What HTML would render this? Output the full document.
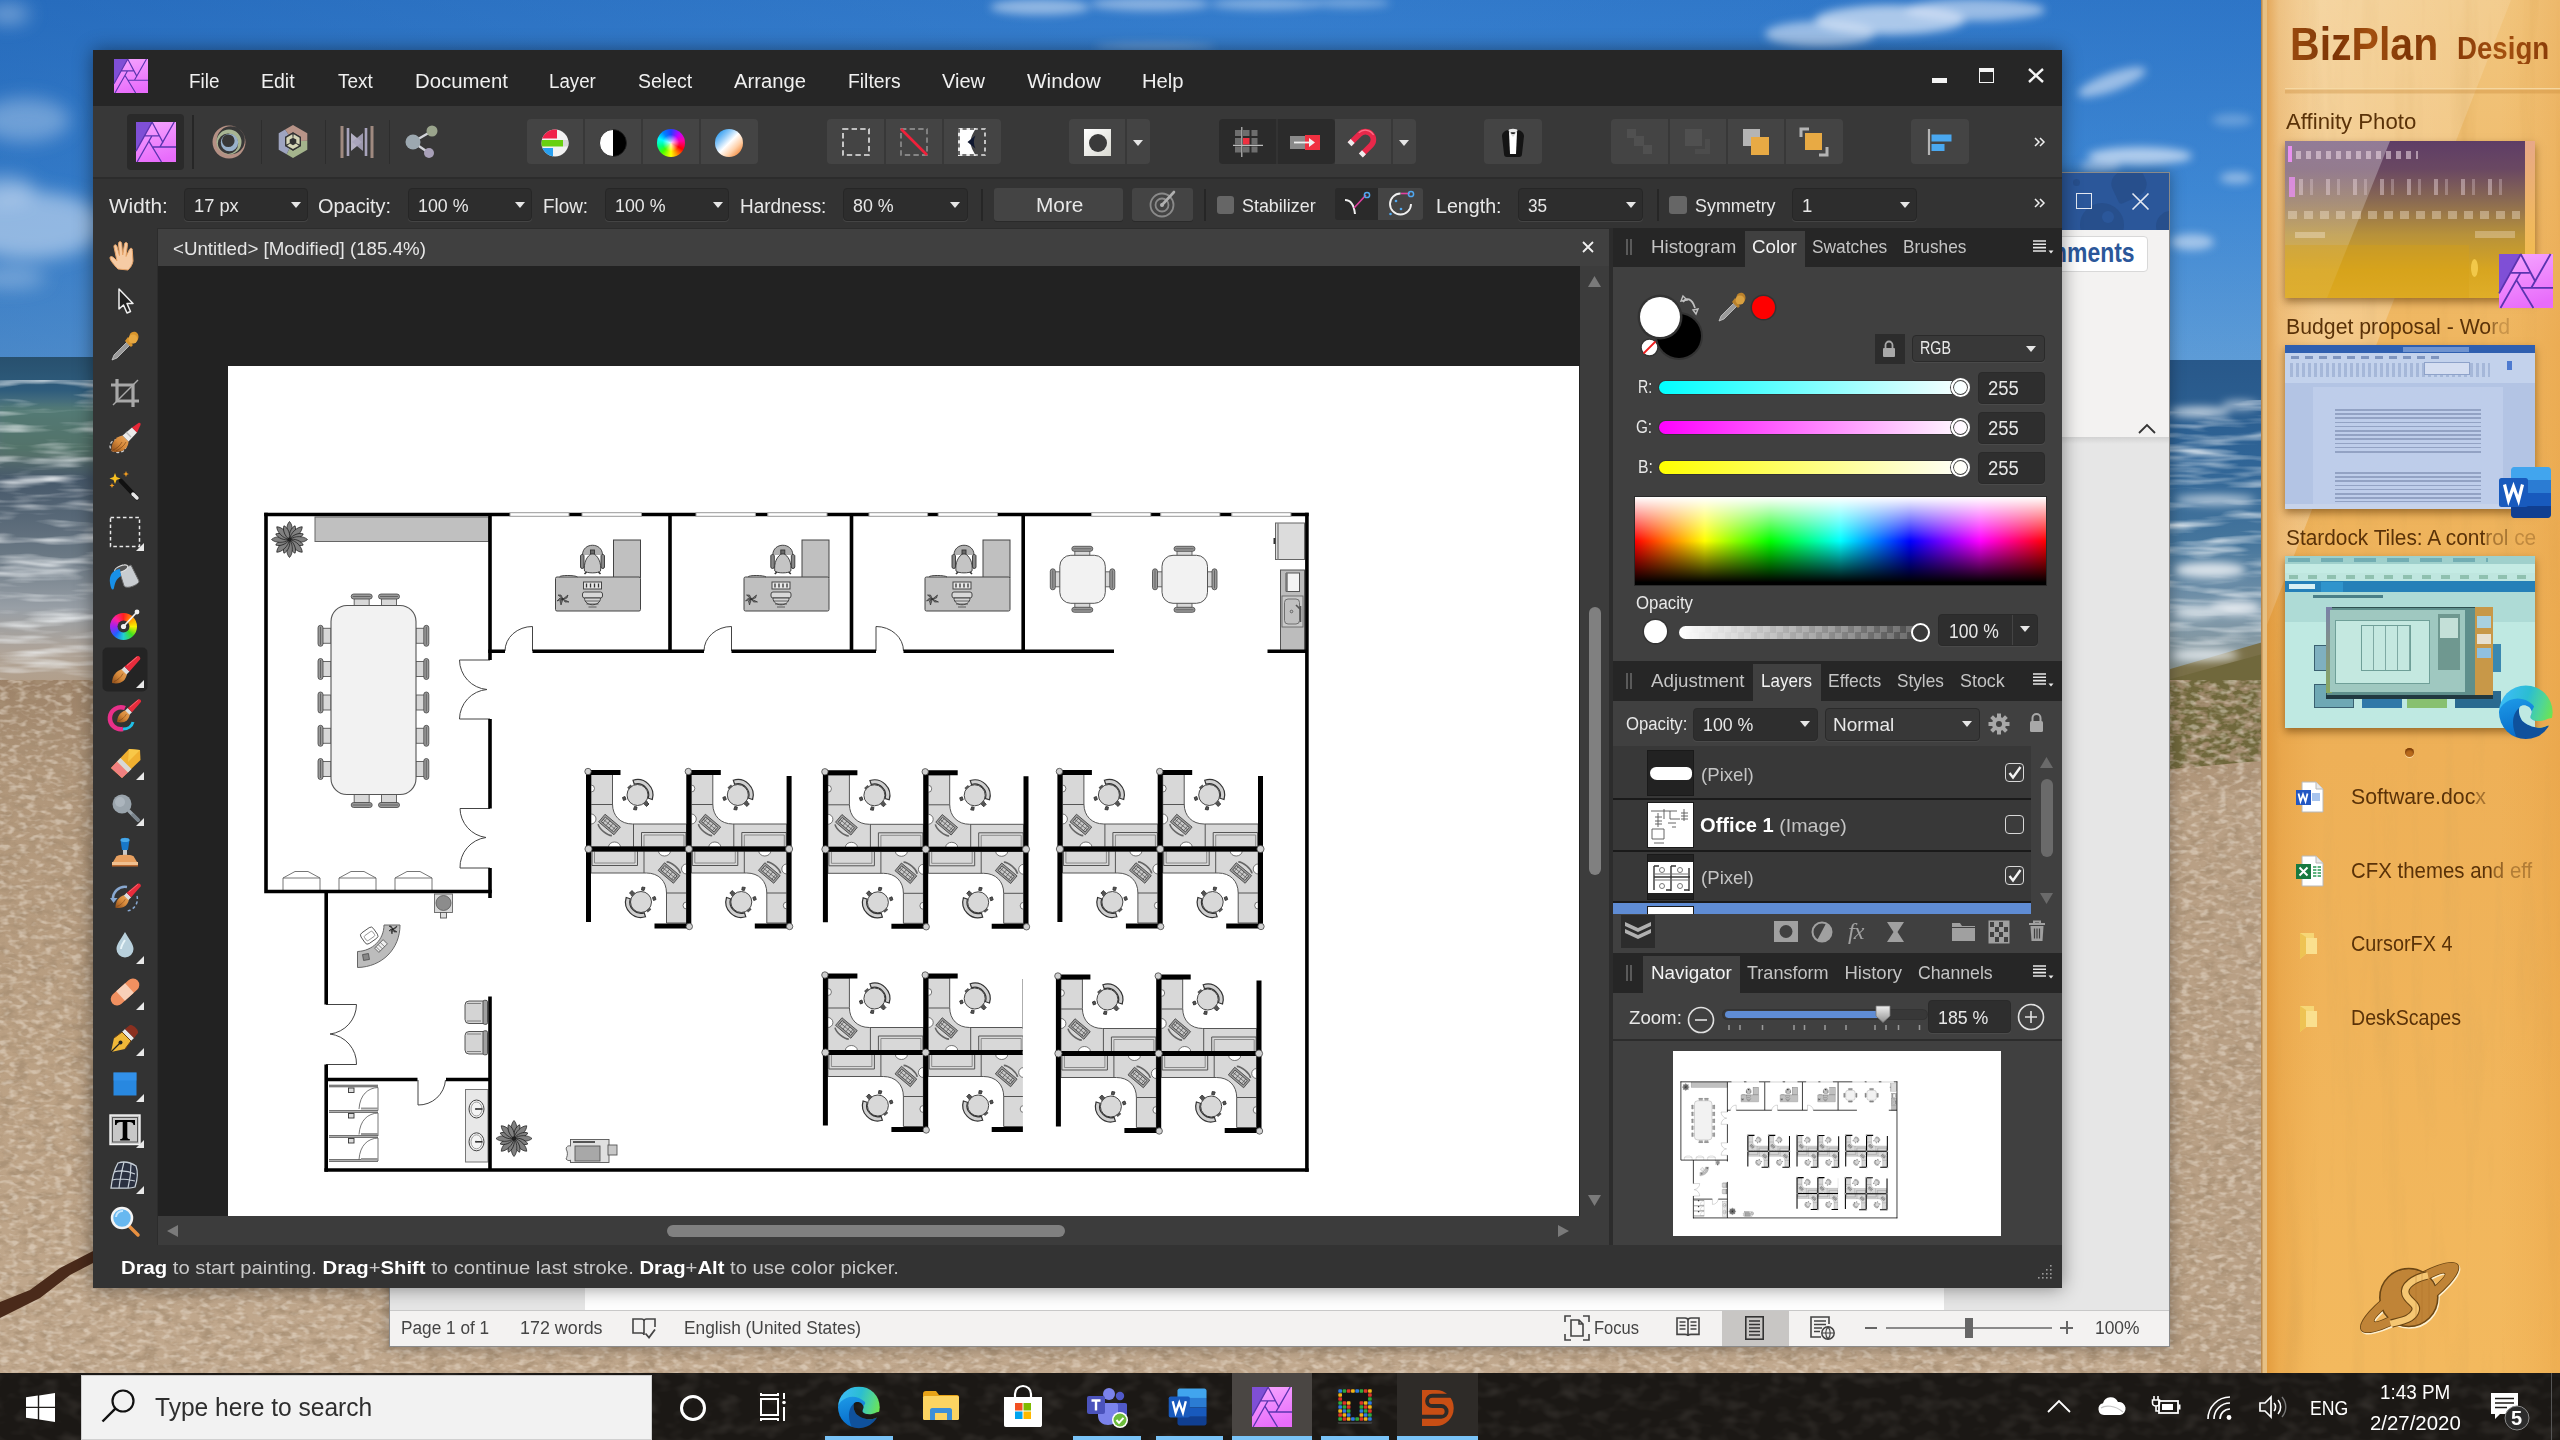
<!DOCTYPE html>
<html><head><meta charset="utf-8"><title>Desktop</title>
<style>
*{box-sizing:border-box;margin:0;padding:0}
html,body{width:2560px;height:1440px;overflow:hidden;background:#2a6fc0}
body{font-family:"Liberation Sans",sans-serif;position:relative}
.a{position:absolute}
.t{position:absolute;white-space:nowrap;line-height:1;transform-origin:0 50%}
svg{position:absolute;overflow:visible}
.mn{color:#f0f0f0;font-size:19.5px;top:71.5px}
.cl{color:#e8e8e8;font-size:19.5px;top:197px}
.cb{background:#2d2d2d;border:1px solid #262626;border-radius:4px;top:188px;height:33px;box-shadow:0 1px 0 #444}
.cv{color:#e8e8e8;font-size:18.5px;top:197px}
.arr{width:0;height:0;border-left:5.5px solid transparent;border-right:5.5px solid transparent;border-top:6px solid #e6e6e6}
.tg{background:#444;border-radius:4px;top:119px;height:45px}
.tdv{background:#383838;width:2px;top:119px;height:45px}
.pt{color:#c4c4c4;font-size:18.5px}
.pta{color:#f2f2f2}
.vb{background:#2e2e2e;border:1px solid #2a2a2a;border-radius:4px;box-shadow:0 1px 0 #4a4a4a}
.vt{color:#e8e8e8;font-size:20px}
.tl{color:#5a3208;font-size:22px}
.wt{color:#444;font-size:18px;top:1319px}
</style></head><body>
<!-- shared symbol defs -->
<svg width="0" height="0" style="position:absolute"><defs>
<linearGradient id="afg" x1="0.2" y1="0" x2="0.5" y2="1"><stop offset="0" stop-color="#f5a4ff"/><stop offset="1" stop-color="#e86cfb"/></linearGradient>
<g id="aflogo">
<rect width="54" height="54" fill="url(#afg)"/>
<path d="M0 0H21.900L0 39.400Z" fill="#7f4fd6"/>
<g fill="none" stroke="#5a34b0" stroke-width="1.800" stroke-linecap="butt">
<path d="M21.900 0L0 39.400M11.300 18.800H30.800M21.700 0L36.600 28M51.600 0L32.200 34M22.800 33.800H54M17.800 26.600L34.400 54M21.600 18.600L1.500 54"/>
</g>
</g>
<g id="wordicon">
<path d="M16 2h34c1.500 0 3 1.500 3 3v10H13V5c0-1.500 1.500-3 3-3z" fill="#41a5ee"/>
<rect x="13" y="15" width="40" height="13" fill="#2b7cd3"/>
<rect x="13" y="28" width="40" height="13" fill="#185abd"/>
<path d="M13 41h40v9c0 1.500-1.500 3-3 3H16c-1.500 0-3-1.500-3-3z" fill="#103f91"/>
<rect x="1" y="13" width="29" height="29" rx="2.500" fill="#185abd"/>
<path d="M6.500 19.500l4 16 5-14 5 14 4-16" fill="none" stroke="#fff" stroke-width="3.200" stroke-linejoin="miter"/>
</g>
<linearGradient id="edg1" gradientUnits="userSpaceOnUse" x1="4" y1="14" x2="55" y2="30"><stop offset="0" stop-color="#3bbcf4"/><stop offset=".45" stop-color="#2bbdd2"/><stop offset=".75" stop-color="#4fd597"/><stop offset="1" stop-color="#6ce452"/></linearGradient>
<linearGradient id="edg2" gradientUnits="userSpaceOnUse" x1="10" y1="14" x2="20" y2="56"><stop offset="0" stop-color="#1c98e6"/><stop offset="1" stop-color="#0669c8"/></linearGradient>
<clipPath id="edgc"><circle cx="27.800" cy="28.300" r="27.800"/></clipPath>
<mask id="edgm" maskUnits="userSpaceOnUse" x="0" y="0" width="60" height="60"><rect width="60" height="60" fill="#fff"/><path d="M21.200 23.200C23 21 26 20.800 28.300 21.400C31 22 33 24 33.900 27.300C34.500 30 31.800 32 32.900 34.400C36 38.500 46 38 50.800 35L60 33V43L50.800 42.100C46 44.500 41 44.800 36.500 43.600C30 42 25 38 23.700 36.500C21 32 20 27 21.200 23.200Z" fill="#000"/></mask>
<g id="edgeicon" clip-path="url(#edgc)"><g mask="url(#edgm)">
<rect width="56" height="57" fill="url(#edg1)"/>
<circle cx="19.500" cy="35.500" r="21.500" fill="url(#edg2)"/>
<path d="M21.200 23.200C20 27 21 32 23.700 36.500C25 38 30 42 36.500 43.600C41 44.800 46 44.500 50.800 42.100L57 42V58H20C16 50 13.500 42 15 34C16 29 18.500 25.500 21.200 23.200Z" fill="#0f519c"/>
<path d="M33.900 27.300C34.500 30 31.800 32 32.900 34.400C36 38.500 46 38 50.800 35L58 35V5H41C40 14 37 22 33.900 27.300Z" fill="url(#edg1)"/>
</g></g>
</defs></svg>
<!-- ===== DESKTOP BACKGROUND ===== -->
<svg class="a" style="left:0;top:0" width="2560" height="1440" viewBox="0 0 2560 1440">
<defs>
<linearGradient id="sky" x1="0" y1="0" x2="0" y2="1"><stop offset="0" stop-color="#2b72c4"/><stop offset=".45" stop-color="#3d86d2"/><stop offset="1" stop-color="#6fa7d8"/></linearGradient>
<linearGradient id="skyx" x1="0" y1="0" x2="1" y2="0"><stop offset="0" stop-color="#1e5fae" stop-opacity=".35"/><stop offset=".5" stop-color="#4a94e0" stop-opacity=".25"/><stop offset="1" stop-color="#3a86d6" stop-opacity=".1"/></linearGradient>
<linearGradient id="sea" x1="0" y1="0" x2="0" y2="1"><stop offset="0" stop-color="#28506e"/><stop offset=".1" stop-color="#2e5c7c"/><stop offset=".16" stop-color="#567a7e"/><stop offset=".3" stop-color="#566e6c"/><stop offset=".37" stop-color="#46586a"/><stop offset=".6" stop-color="#6a7884"/><stop offset=".76" stop-color="#989fa6"/><stop offset=".9" stop-color="#b0a498"/><stop offset="1" stop-color="#b29e88"/></linearGradient><linearGradient id="sea2" x1="0" y1="0" x2="0" y2="1"><stop offset="0" stop-color="#28588a"/><stop offset=".3" stop-color="#2f6496"/><stop offset=".55" stop-color="#45759c"/><stop offset=".75" stop-color="#7895aa"/><stop offset=".9" stop-color="#8a9aa0"/><stop offset="1" stop-color="#8a8a74"/></linearGradient><linearGradient id="sand" x1="0" y1="0" x2="0" y2="1"><stop offset="0" stop-color="#9c8268"/><stop offset=".12" stop-color="#b0967a"/><stop offset=".5" stop-color="#bba184"/><stop offset="1" stop-color="#c2aa90"/></linearGradient>
<filter id="nz" x="0" y="0" width="100%" height="100%"><feTurbulence type="fractalNoise" baseFrequency="0.07 0.13" numOctaves="3" seed="4"/><feColorMatrix values="0 0 0 0 .38  0 0 0 0 .27  0 0 0 0 .17  0 0 0 -3.2 1.8"/></filter><filter id="nz2" x="0" y="0" width="100%" height="100%"><feTurbulence type="fractalNoise" baseFrequency="0.11 0.2" numOctaves="2" seed="21"/><feColorMatrix values="0 0 0 0 .88  0 0 0 0 .8  0 0 0 0 .7  0 0 0 -3.4 1.8"/></filter>
<filter id="nzw" x="0" y="0" width="100%" height="100%"><feTurbulence type="fractalNoise" baseFrequency="0.012 0.09" numOctaves="3" seed="9"/><feColorMatrix values="0 0 0 0 .92  0 0 0 0 .95  0 0 0 0 .97  0 0 0 -2.4 1.25"/></filter>
<filter id="bl6"><feGaussianBlur stdDeviation="9"/></filter>
<filter id="bl3"><feGaussianBlur stdDeviation="4"/></filter>
</defs>
<rect width="2560" height="420" fill="url(#sky)"/>
<rect width="2560" height="420" fill="url(#skyx)"/>
<!-- clouds -->
<g filter="url(#bl6)" fill="#cfe0f4">
<ellipse cx="8" cy="14" rx="22" ry="10" opacity=".45"/><ellipse cx="25" cy="120" rx="45" ry="22" opacity=".4"/>
<ellipse cx="30" cy="225" rx="75" ry="34" opacity=".6"/><ellipse cx="5" cy="190" rx="30" ry="14" opacity=".5"/><ellipse cx="10" cy="278" rx="36" ry="10" opacity=".4"/>
</g>
<g filter="url(#bl3)" fill="#dfeaf8">
<ellipse cx="1040" cy="7" rx="50" ry="8" opacity=".55"/><ellipse cx="1150" cy="4" rx="60" ry="7" opacity=".5"/><ellipse cx="1265" cy="4" rx="55" ry="6" opacity=".45"/><ellipse cx="1350" cy="3" rx="40" ry="5" opacity=".4"/><ellipse cx="1155" cy="47" rx="60" ry="4" opacity=".3"/><ellipse cx="1820" cy="34" rx="55" ry="13" opacity=".6"/><ellipse cx="1890" cy="20" rx="75" ry="15" opacity=".7"/><ellipse cx="1975" cy="10" rx="70" ry="11" opacity=".6"/>
<ellipse cx="2112" cy="82" rx="36" ry="9" opacity=".6" transform="rotate(-20 2112 82)"/><ellipse cx="2140" cy="156" rx="52" ry="9" opacity=".7"/><ellipse cx="2100" cy="166" rx="20" ry="6" opacity=".5"/><ellipse cx="2236" cy="178" rx="16" ry="6" opacity=".5"/><ellipse cx="2192" cy="242" rx="22" ry="8" opacity=".6"/><ellipse cx="2232" cy="120" rx="20" ry="6" opacity=".3"/>
</g>
<!-- left sea -->
<rect x="0" y="357" width="120" height="330" fill="url(#sea)"/>
<rect x="0" y="405" width="120" height="50" fill="#4d7a5e" opacity=".3" filter="url(#bl3)"/>
<rect x="0" y="380" width="120" height="300" filter="url(#nzw)" opacity=".9"/>
<!-- right sea -->
<rect x="2160" y="360" width="110" height="330" fill="url(#sea2)"/>
<rect x="2160" y="400" width="110" height="250" filter="url(#nzw)" opacity=".8"/>
<path d="M2160 672L2270 640V800H2160z" fill="#7a7048"/>
<g filter="url(#bl3)" fill="#eef2f6"><ellipse cx="2200" cy="412" rx="30" ry="5" opacity=".8"/><ellipse cx="2240" cy="405" rx="18" ry="4" opacity=".7"/><ellipse cx="2215" cy="500" rx="40" ry="5" opacity=".7"/><ellipse cx="2210" cy="570" rx="36" ry="8" opacity=".85"/><ellipse cx="2235" cy="608" rx="26" ry="7" opacity=".9"/><ellipse cx="2195" cy="612" rx="22" ry="6" opacity=".8"/><ellipse cx="2205" cy="655" rx="34" ry="6" opacity=".8"/></g>
<!-- sand -->
<rect x="0" y="680" width="2300" height="760" fill="url(#sand)"/>
<path d="M2160 682L2270 652V760L2160 770z" fill="#70683c"/><rect x="2160" y="680" width="110" height="90" filter="url(#nz)" opacity=".9"/>
<rect x="2160" y="790" width="110" height="600" fill="#b9a085"/>
<rect x="0" y="680" width="2300" height="760" filter="url(#nz)" opacity=".75"/><rect x="0" y="680" width="2300" height="760" filter="url(#nz2)" opacity=".45"/>
<path d="M0 1318 L40 1298 L70 1275 L95 1262 L95 1250 L60 1268 L30 1290 L0 1302Z" fill="#4a2a1a"/>
</svg>
<!-- ===== WORD WINDOW (behind) ===== -->
<div class="a" style="left:389px;top:172px;width:1781px;height:1175px;background:#e6e6e6;border:1px solid #8a8a8a;box-shadow:0 0 14px rgba(0,0,0,.35)"></div>
<div class="a" style="left:390px;top:173px;width:1779px;height:57px;background:#2b579a;overflow:hidden">
  <div class="a" style="left:1690px;top:30px;width:44px;height:44px;border-radius:50%;background:#274f8c"></div>
  <div class="a" style="left:1712px;top:38px;width:12px;height:12px;border-radius:50%;background:#2b579a"></div>
  <div class="a" style="left:1683px;top:6px;width:7px;height:7px;border-radius:50%;background:#274f8c"></div>
  <div class="a" style="left:1722px;top:-4px;width:34px;height:30px;border-radius:40% 10% 40% 10%;background:#274f8c;transform:rotate(-25deg)"></div>
  <div class="a" style="left:1766px;top:38px;width:30px;height:30px;border-radius:50%;background:#274f8c"></div>
</div>
<div class="a" style="left:390px;top:230px;width:1779px;height:207px;background:#f3f2f1"></div>
<div class="a" style="left:390px;top:437px;width:1779px;height:7px;background:linear-gradient(#d2d2d2,#e6e6e6)"></div>
<!-- word window controls -->
<div class="a" style="left:2076px;top:193px;width:16px;height:16px;border:1.6px solid #e4e9f2"></div>
<svg style="left:2132px;top:193px" width="17" height="17" viewBox="0 0 17 17"><path d="M0.5 0.5L16.5 16.5M16.5 0.5L0.5 16.5" stroke="#e4e9f2" stroke-width="1.6" fill="none"/></svg>
<!-- comments button -->
<div class="a" style="left:2000px;top:236px;width:148px;height:36px;background:#fff;border:1px solid #d8d8d8;border-radius:4px"></div>
<div class="t" style="left:2015.500px;top:240px;font-size:27px;font-weight:bold;color:#2b579a;transform:scaleX(0.850)">Comments</div>
<svg style="left:2138px;top:423px" width="18" height="11" viewBox="0 0 18 11"><path d="M1 10L9 2L17 10" stroke="#333" stroke-width="1.8" fill="none"/></svg>
<!-- bottom: page + status -->
<div class="a" style="left:585px;top:1288px;width:1359px;height:22px;background:#fff"></div>
<div class="a" style="left:390px;top:1310px;width:1779px;height:36px;background:#f3f2f1;border-top:1px solid #c8c8c8"></div>
<div class="t wt" style="left:400.5px;transform:scaleX(0.957)">Page 1 of 1</div>
<div class="t wt" style="left:519.5px;transform:scaleX(0.994)">172 words</div>
<svg style="left:632px;top:1317px" width="24" height="23" viewBox="0 0 24 23"><path d="M12 4.200C12 3 10.900 2 9.500 2H1v14h8.500c1.400 0 2.500.800 2.500 2zM12 4.200C12 3 13.100 2 14.500 2H23v8" fill="none" stroke="#444" stroke-width="1.600"/><path d="M13.500 16.500l3.500 4 6-8" fill="none" stroke="#444" stroke-width="1.800"/></svg>
<div class="t wt" style="left:683.5px;transform:scaleX(0.962)">English (United States)</div>
<svg style="left:1564px;top:1315px" width="26" height="26" viewBox="0 0 26 26"><path d="M1 7V1h6M19 1h6v6M25 19v6h-6M7 25H1v-6" fill="none" stroke="#444" stroke-width="1.6"/><path d="M7 5h8l4 4v12H7z M15 5v4h4" fill="none" stroke="#444" stroke-width="1.6"/></svg>
<div class="t wt" style="left:1593.5px;transform:scaleX(0.918)">Focus</div>
<svg style="left:1676px;top:1316px" width="24" height="22" viewBox="0 0 24 22"><path d="M1 2h8c1.6 0 3 1 3 2.6V20c0-1-1.4-1.6-3-1.6H1zM23 2h-8c-1.6 0-3 1-3 2.6V20c0-1 1.4-1.6 3-1.6h8z" fill="none" stroke="#444" stroke-width="1.6"/><path d="M3.5 6h6M3.5 9.5h6M3.5 13h6M14.5 6h6M14.5 9.5h6M14.5 13h6" stroke="#444" stroke-width="1.3"/></svg>
<div class="a" style="left:1722px;top:1311px;width:67px;height:35px;background:#c8c6c4"></div>
<svg style="left:1745px;top:1316px" width="19" height="24" viewBox="0 0 19 24"><rect x=".8" y=".8" width="17.4" height="22.4" fill="none" stroke="#333" stroke-width="1.6"/><path d="M4 5h11M4 8.5h11M4 12h11M4 15.5h11M4 19h11" stroke="#333" stroke-width="1.5"/></svg>
<svg style="left:1810px;top:1316px" width="26" height="24" viewBox="0 0 26 24"><path d="M19 8V1H1v20h10" fill="none" stroke="#444" stroke-width="1.6"/><path d="M4 5h12M4 8.5h12M4 12h8M4 15.5h6" stroke="#444" stroke-width="1.4"/><circle cx="18" cy="17" r="6.2" fill="#f3f2f1" stroke="#444" stroke-width="1.5"/><path d="M12 17h12M18 11c-3 3-3 9 0 12M18 11c3 3 3 9 0 12" fill="none" stroke="#444" stroke-width="1.2"/></svg>
<div class="a" style="left:1865px;top:1327px;width:12px;height:1.5px;background:#666"></div>
<div class="a" style="left:1886px;top:1327px;width:166px;height:1.5px;background:#8a8a8a"></div>
<div class="a" style="left:1965px;top:1318px;width:8px;height:20px;background:#666"></div>
<div class="a" style="left:2060px;top:1327px;width:13px;height:1.5px;background:#666"></div>
<div class="a" style="left:2066px;top:1321px;width:1.5px;height:13px;background:#666"></div>
<div class="t wt" style="left:2094.5px;transform:scaleX(0.967)">100%</div>
<!-- ===== AFFINITY PHOTO WINDOW ===== -->
<div class="a" style="left:93px;top:50px;width:1969px;height:1238px;background:#333;box-shadow:0 0 18px rgba(0,0,0,.45)"></div>
<div class="a" style="left:93px;top:50px;width:1969px;height:56px;background:#262626"></div>
<div class="a" style="left:93px;top:106px;width:1969px;height:73px;background:#383838;border-bottom:2px solid #2c2c2c"></div>
<div class="a" style="left:93px;top:181px;width:1969px;height:47px;background:#333"></div>
<div class="a" style="left:93px;top:228px;width:64px;height:1017px;background:#333"></div>
<div class="a" style="left:157px;top:228px;width:1456px;height:1017px;background:#2c2c2c"></div>
<div class="a" style="left:158px;top:229px;width:1451px;height:37px;background:#404040"></div>
<div class="a" style="left:158px;top:266px;width:1422px;height:950px;background:#222"></div>
<div class="a" style="left:228px;top:366px;width:1351px;height:850px;background:#fff"></div>
<div class="a" style="left:1580px;top:266px;width:29px;height:950px;background:#3c3c3c"></div>
<div class="a" style="left:158px;top:1216px;width:1451px;height:29px;background:#3c3c3c"></div>
<div class="a" style="left:1613px;top:228px;width:449px;height:1017px;background:#404040"></div>
<div class="a" style="left:93px;top:1245px;width:1969px;height:43px;background:#333"></div>
<!-- title bar -->
<svg style="left:114px;top:59px" width="34" height="34" viewBox="0 0 54 54"><use href="#aflogo"/></svg>
<div class="t mn" style="left:188.5px;transform:scaleX(0.968)">File</div>
<div class="t mn" style="left:261px;transform:scaleX(1.000)">Edit</div>
<div class="t mn" style="left:337.5px;transform:scaleX(0.972)">Text</div>
<div class="t mn" style="left:414.5px;transform:scaleX(1.045)">Document</div>
<div class="t mn" style="left:549px;transform:scaleX(0.959)">Layer</div>
<div class="t mn" style="left:638px;transform:scaleX(1.000)">Select</div>
<div class="t mn" style="left:733.5px;transform:scaleX(1.036)">Arrange</div>
<div class="t mn" style="left:847.5px;transform:scaleX(0.991)">Filters</div>
<div class="t mn" style="left:941.5px;transform:scaleX(1.024)">View</div>
<div class="t mn" style="left:1026.5px;transform:scaleX(1.065)">Window</div>
<div class="t mn" style="left:1142px;transform:scaleX(1.038)">Help</div>
<div class="a" style="left:1932px;top:78px;width:15px;height:5px;background:#f4f4f4"></div>
<div class="a" style="left:1979px;top:68px;width:15px;height:15px;border:1.8px solid #f4f4f4;border-top-width:4.5px"></div>
<svg style="left:2028px;top:68px" width="16" height="15" viewBox="0 0 16 15"><path d="M1 1L15 14M15 1L1 14" stroke="#f4f4f4" stroke-width="2.4" fill="none"/></svg>
<!-- toolbar: personas -->
<div class="a" style="left:127px;top:114px;width:57px;height:56px;background:#2a2a2a;border-radius:4px"></div>
<svg style="left:136px;top:122px" width="40" height="40" viewBox="0 0 54 54"><use href="#aflogo"/></svg>
<div class="a" style="left:192px;top:115px;width:2px;height:54px;background:#262626"></div>
<svg style="left:210px;top:123px" width="38" height="38" viewBox="0 0 38 38"><path fill-rule="evenodd" fill="#b49084" d="M2.500 19a16.500 16.500 0 1 0 33 0a16.500 16.500 0 1 0-33 0ZM6.800 17.300a14 14 0 1 0 28 0a14 14 0 1 0-28 0Z"/><path fill-rule="evenodd" fill="#a8b694" d="M6.500 19a12.500 12.500 0 1 0 25 0a12.500 12.500 0 1 0-25 0ZM7.800 20.800a10.200 10.200 0 1 0 20.400 0a10.200 10.200 0 1 0-20.400 0Z"/><path fill-rule="evenodd" fill="#98b0ca" d="M10.800 19.500a8.700 8.700 0 1 0 17.400 0a8.700 8.700 0 1 0-17.400 0ZM12 17.800a6.300 6.300 0 1 0 12.600 0a6.300 6.300 0 1 0-12.600 0Z"/></svg>
<svg style="left:275px;top:124px" width="36" height="36" viewBox="0 0 36 36"><polygon points="10.1,5.5 18.0,1.0 32.3,9.3 32.3,16.7 26.0,17.0 26.0,12.9 18.0,8.3 13.6,10.8" fill="#b89488"/><polygon points="32.3,16.7 32.3,25.8 18.0,34.0 11.6,30.3 14.4,24.6 18.0,26.7 26.0,22.1 26.0,17.0" fill="#a4b48c"/><polygon points="11.6,30.3 3.7,25.8 3.7,9.2 10.1,5.5 13.6,10.8 10.0,12.9 10.0,22.1 14.4,24.6" fill="#9ea4c0"/><polygon points="18.0,8.3 26.0,12.9 26.0,22.1 18.0,26.7 10.0,22.1 10.0,12.9" fill="#333"/><polygon points="18.7,10.3 24.6,13.7 24.6,20.5 21.3,19.0 21.3,15.6 18.3,13.9" fill="#d6d6b8"/><polygon points="23.9,21.7 18.0,25.1 12.1,21.7 15.0,19.6 18.0,21.3 21.0,19.6" fill="#d6d6b8"/><polygon points="11.4,20.5 11.4,13.7 17.3,10.3 17.7,13.9 14.7,15.6 14.7,19.0" fill="#d6d6b8"/></svg>
<svg style="left:340px;top:125px" width="34" height="34" viewBox="0 0 34 34"><path d="M2 1v32M32 1v32" stroke="#a08a80" stroke-width="3"/><path d="M8 3v28M26 3v28" stroke="#a8a4bc" stroke-width="2.600"/><path d="M11 8l11 9-11 9z" fill="#b4b0c4"/><path d="M23 8L12 17l11 9z" fill="#a8a4bc" opacity=".9"/></svg>
<svg style="left:404px;top:125px" width="34" height="34" viewBox="0 0 34 34"><path d="M9 17L28 6M9 17l16 11" stroke="#d2d4da" stroke-width="2.400"/><circle cx="9" cy="17" r="7.500" fill="#9ca8b0"/><circle cx="28" cy="6" r="5.500" fill="#9aa48c"/><circle cx="25" cy="28" r="5" fill="#a8a0b8"/></svg>
<div class="a" style="left:260.500px;top:120px;width:1.500px;height:44px;background:#2d2d2d"></div><div class="a" style="left:324.500px;top:120px;width:1.500px;height:44px;background:#2d2d2d"></div><div class="a" style="left:388.500px;top:120px;width:1.500px;height:44px;background:#2d2d2d"></div>
<!-- group 2 -->
<div class="a tg" style="left:527px;width:231px"></div>
<div class="a tdv" style="left:583px"></div><div class="a tdv" style="left:641px"></div><div class="a tdv" style="left:699px"></div>
<svg style="left:541px;top:129px" width="28" height="28" viewBox="0 0 28 28"><defs><clipPath id="c14"><circle cx="14" cy="14" r="13.500"/></clipPath></defs><g clip-path="url(#c14)"><rect width="28" height="28" fill="#f2f2f2"/><rect x="0" y="0" width="16" height="9.500" fill="#f0204a"/><rect x="0" y="11" width="22" height="6.500" fill="#68d010"/><rect x="0" y="19" width="12" height="9" fill="#28a0f0"/><rect x="22" y="11" width="6" height="6.500" fill="#d8d8d8"/></g></svg>
<svg style="left:599px;top:129px" width="28" height="28" viewBox="0 0 28 28"><circle cx="14" cy="14" r="13.500" fill="#000"/><path d="M14 .5a13.500 13.500 0 0 0 0 27z" fill="#fff"/><circle cx="14" cy="14" r="13.500" fill="none" stroke="#222" stroke-width=".8"/></svg>
<div class="a" style="left:657px;top:129px;width:28px;height:28px;border-radius:50%;background:conic-gradient(from 0deg,#2040ff,#c000ff 12%,#ff00a0 22%,#ff0000 33%,#ff9000 42%,#ffff00 50%,#40ff00 62%,#00ff80 70%,#00ffff 80%,#0080ff 90%,#2040ff)"></div>
<div class="a" style="left:657px;top:129px;width:28px;height:28px;border-radius:50%;background:radial-gradient(circle,rgba(255,255,255,.85) 0,rgba(255,255,255,0) 42%)"></div>
<div class="a" style="left:715px;top:129px;width:28px;height:28px;border-radius:50%;background:linear-gradient(135deg,#2a9af0 10%,#8cc8f8 30%,#ffffff 50%,#ffd0a8 70%,#f08030 92%)"></div>
<!-- group 3 -->
<div class="a tg" style="left:827px;width:174px"></div>
<div class="a tdv" style="left:884px"></div><div class="a tdv" style="left:942px"></div>
<svg style="left:842px;top:128px" width="28" height="28" viewBox="0 0 28 28"><rect x="1" y="1" width="26" height="26" fill="none" stroke="#e8e8e8" stroke-width="1.600" stroke-dasharray="5.400 3.200"/></svg>
<svg style="left:900px;top:128px" width="28" height="28" viewBox="0 0 28 28"><rect x="1" y="1" width="26" height="26" fill="none" stroke="#9a9a9a" stroke-width="1.400" stroke-dasharray="5.400 3.200"/><path d="M1 1l26 26" stroke="#f0203a" stroke-width="2.600"/></svg>
<svg style="left:958px;top:128px" width="28" height="28" viewBox="0 0 28 28"><path d="M0 0H18C14.500 6 12.500 10 12.500 14s2 8 5.500 14H0z" fill="#fff"/><path d="M9.500 14l8-6.500c-2.200 4.200-2.200 8.800 0 13z" fill="#101830"/><rect x="1" y="1" width="26" height="26" fill="none" stroke="#e4e4e4" stroke-width="1.600" stroke-dasharray="4 3.400"/><path d="M16 1H1V27H16" fill="none" stroke="#444" stroke-width="1.600" stroke-dasharray="4 3.400"/></svg>
<!-- group 4 -->
<div class="a tg" style="left:1069px;width:81px"></div>
<div class="a tdv" style="left:1125px"></div>
<div class="a" style="left:1084px;top:129px;width:27px;height:27px;background:linear-gradient(135deg,#fff,#d8d8d0)"></div>
<div class="a" style="left:1088.500px;top:133.500px;width:18px;height:18px;border-radius:50%;background:#3a3a3a"></div>
<div class="a arr" style="left:1132.500px;top:140px"></div>
<!-- group 5 -->
<div class="a tg" style="left:1219px;width:116px;background:#2b2b2b"></div>
<div class="a" style="left:1276px;top:119px;width:1.500px;height:45px;background:#333"></div>
<div class="a tg" style="left:1335px;width:81px;border-radius:0 4px 4px 0"></div>
<div class="a tdv" style="left:1391px"></div>
<svg style="left:1233px;top:127px" width="30" height="30" viewBox="0 0 30 30"><g fill="#6e6e6e"><rect x="2" y="3" width="6" height="6"/><rect x="10" y="3" width="6.500" height="6"/><rect x="18.500" y="3" width="6" height="6"/><rect x="2" y="11" width="6" height="6.500"/><rect x="18.500" y="11" width="6" height="6.500"/><rect x="2" y="19.500" width="6" height="6"/><rect x="10" y="19.500" width="6.500" height="6"/><rect x="18.500" y="19.500" width="6" height="6"/></g><rect x="10" y="11" width="6.500" height="6.500" fill="#f03040"/><path d="M8.800 0v30M0 18.300h30" stroke="#bdbdbd" stroke-width="1.200"/></svg>
<svg style="left:1290px;top:135px" width="30" height="15" viewBox="0 0 30 15"><rect x="0" y="1" width="15" height="13" fill="#8a8a8a"/><rect x="15" y="0" width="15" height="15" fill="#f03040"/><path d="M4 7.500h17" stroke="#f0f0f0" stroke-width="1.800"/><path d="M19 3l6 4.500-6 4.500z" fill="#f0f0f0"/></svg>
<svg style="left:1346px;top:126px" width="34" height="32" viewBox="0 0 34 32"><g transform="rotate(45 18 15)"><path d="M10 27V13a8 8 0 0 1 16 0v14" stroke="#e8284a" stroke-width="5.600" fill="none"/><path d="M10 27.500v-4.500M26 27.500v-4.500" stroke="#ececec" stroke-width="5.600"/><path d="M8.500 13a9.500 9.500 0 0 1 12-9" stroke="#ff7088" stroke-width="1.200" fill="none"/></g></svg>
<div class="a arr" style="left:1398.500px;top:140px"></div>
<!-- group 6 assistant -->
<div class="a tg" style="left:1484px;width:58px"></div>
<svg style="left:1500px;top:128px" width="26" height="30" viewBox="0 0 26 30"><path d="M2 8c0-3 3-6 7-6h8c4 0 7 3 7 6l-2 18c0 2-1 3-3 3H7c-2 0-3-1-3-3z" fill="#141414"/><path d="M9 4h8l-1 22H10z" fill="#fff"/><path d="M9 4l4 5 4-5-1.500-2h-5z" fill="#d8d8d8"/><path d="M10.500 3.500h5l-1 2.500h-3z" fill="#222"/><ellipse cx="13" cy="2.500" rx="4.500" ry="1.800" fill="#e8e8e8"/></svg>
<!-- group 7 -->
<div class="a tg" style="left:1611px;width:232px"></div>
<div class="a tdv" style="left:1668px"></div><div class="a tdv" style="left:1726px"></div><div class="a tdv" style="left:1784px"></div>
<svg style="left:1626px;top:128px" width="28" height="28" viewBox="0 0 28 28"><g fill="#505050"><rect x="1" y="1" width="9" height="9"/><rect x="8" y="8" width="10" height="10"/><rect x="17" y="17" width="9" height="9"/></g></svg>
<svg style="left:1684px;top:128px" width="28" height="28" viewBox="0 0 28 28"><rect x="1" y="1" width="17" height="17" fill="#505050"/><path d="M21 11h5v15H11v-5h10z" fill="#4c4c4c"/></svg>
<svg style="left:1742px;top:128px" width="28" height="28" viewBox="0 0 28 28"><rect x="1" y="1" width="17" height="17" fill="#b4b4b4"/><rect x="9" y="9" width="18" height="18" fill="#e8aa44"/></svg>
<svg style="left:1800px;top:128px" width="28" height="28" viewBox="0 0 28 28"><path d="M1 9V1h8" fill="none" stroke="#b4b4b4" stroke-width="3"/><path d="M27 19v8h-8" fill="none" stroke="#b4b4b4" stroke-width="3"/><rect x="5" y="5" width="17" height="17" fill="#e8aa44"/></svg>
<!-- group 8 -->
<div class="a tg" style="left:1911px;width:58px"></div>
<svg style="left:1927px;top:128px" width="28" height="28" viewBox="0 0 28 28"><path d="M2 1v26" stroke="#b4b4b4" stroke-width="2.200"/><rect x="4.500" y="6.500" width="20" height="7" fill="#4aa8f0"/><rect x="4.500" y="16" width="13" height="7" fill="#4aa8f0"/></svg>
<svg style="left:2034px;top:137px" width="11" height="10" viewBox="0 0 11 10"><path d="M1 1l4 4-4 4M6 1l4 4-4 4" fill="none" stroke="#f0f0f0" stroke-width="1.500"/></svg>
<svg style="left:2034px;top:198px" width="11" height="10" viewBox="0 0 11 10"><path d="M1 1l4 4-4 4M6 1l4 4-4 4" fill="none" stroke="#f0f0f0" stroke-width="1.500"/></svg>
<!-- context toolbar -->
<div class="t cl" style="left:108.5px;transform:scaleX(1.064)">Width:</div>
<div class="a cb" style="left:184px;width:124px"></div><div class="t cv" style="left:193.5px;transform:scaleX(0.989)">17 px</div><div class="a arr" style="left:291px;top:202px"></div>
<div class="t cl" style="left:318px;transform:scaleX(1.021)">Opacity:</div>
<div class="a cb" style="left:408px;width:124px"></div><div class="t cv" style="left:417.5px;transform:scaleX(0.962)">100 %</div><div class="a arr" style="left:515px;top:202px"></div>
<div class="t cl" style="left:542.5px;transform:scaleX(0.968)">Flow:</div>
<div class="a cb" style="left:605px;width:124px"></div><div class="t cv" style="left:615px;transform:scaleX(0.962)">100 %</div><div class="a arr" style="left:713px;top:202px"></div>
<div class="t cl" style="left:740px;transform:scaleX(0.972)">Hardness:</div>
<div class="a cb" style="left:843px;width:125px"></div><div class="t cv" style="left:852.5px;transform:scaleX(0.964)">80 %</div><div class="a arr" style="left:950px;top:202px"></div>
<div class="a" style="left:981px;top:189px;width:2px;height:32px;background:#262626"></div>
<div class="a" style="left:994px;top:187.500px;width:129px;height:33px;background:#444;border-radius:3px;box-shadow:0 1px 0 #2a2a2a"></div>
<div class="t cl" style="left:1035.5px;top:196px;transform:scaleX(1.068)">More</div>
<div class="a" style="left:1132px;top:187.500px;width:61px;height:33px;background:#444;border-radius:3px;box-shadow:0 1px 0 #2a2a2a"></div>
<svg style="left:1148px;top:189px" width="30" height="30" viewBox="0 0 30 30"><circle cx="14" cy="16" r="11.500" fill="none" stroke="#8a8a8a" stroke-width="1.800"/><circle cx="14" cy="16" r="6.500" fill="none" stroke="#8a8a8a" stroke-width="1.800"/><path d="M14 16L26 3" stroke="#b0b0b0" stroke-width="2.600" stroke-linecap="round"/><circle cx="14" cy="16" r="2" fill="#b0b0b0"/></svg>
<div class="a" style="left:1204px;top:189px;width:2px;height:32px;background:#262626"></div>
<div class="a" style="left:1216.500px;top:196px;width:17.500px;height:17.500px;background:#666;border-radius:3px"></div>
<div class="t cl" style="left:1242px;top:195.500px;font-size:19px;transform:scaleX(0.942)">Stabilizer</div>
<div class="a" style="left:1335px;top:188px;width:43px;height:32px;background:#2a2a2a;border-radius:3px 0 0 3px"></div>
<div class="a" style="left:1378px;top:188px;width:45px;height:32px;background:#444;border-radius:0 3px 3px 0"></div>
<svg style="left:1343px;top:191px" width="28" height="26" viewBox="0 0 28 26"><path d="M2 9c6 0 9 5 10 14" fill="none" stroke="#f0f0f0" stroke-width="2"/><path d="M11 17L23 4" stroke="#e040a0" stroke-width="1.600"/><circle cx="24" cy="4" r="2.600" fill="none" stroke="#50a8f0" stroke-width="1.500"/></svg>
<svg style="left:1387px;top:190px" width="28" height="28" viewBox="0 0 28 28"><path d="M24 14A10.500 10.500 0 1 1 13.500 3.500" fill="none" stroke="#f0f0f0" stroke-width="1.900"/><path d="M14 3.500h9" stroke="#e040a0" stroke-width="1.600"/><circle cx="24" cy="4" r="2.600" fill="none" stroke="#50a8f0" stroke-width="1.500"/><circle cx="9" cy="11" r="1.300" fill="#50a8f0"/><circle cx="14" cy="19" r="1.300" fill="#50a8f0"/><circle cx="3.500" cy="24" r="1.300" fill="#50a8f0"/></svg>
<div class="t cl" style="left:1436px;transform:scaleX(1.008)">Length:</div>
<div class="a cb" style="left:1518px;width:125px"></div><div class="t cv" style="left:1528px;transform:scaleX(0.929)">35</div><div class="a arr" style="left:1626px;top:202px"></div>
<div class="a" style="left:1657px;top:189px;width:2px;height:32px;background:#262626"></div>
<div class="a" style="left:1669px;top:196px;width:17.500px;height:17.500px;background:#666;border-radius:3px"></div>
<div class="t cl" style="left:1694.5px;top:195.500px;font-size:19px;transform:scaleX(0.942)">Symmetry</div>
<div class="a cb" style="left:1792px;width:125px"></div><div class="t cv" style="left:1802px">1</div><div class="a arr" style="left:1900px;top:202px"></div>
<!-- doc tab -->
<div class="t" style="left:173px;top:241px;font-size:17.500px;color:#e6e6e6;transform:scaleX(1.070)">&lt;Untitled&gt; [Modified] (185.4%)</div>
<svg style="left:1582px;top:241px" width="12" height="12" viewBox="0 0 12 12"><path d="M1 1l10 10M11 1L1 11" stroke="#f0f0f0" stroke-width="1.800"/></svg>
<!-- scrollbars -->
<svg style="left:1588px;top:276px" width="13" height="11" viewBox="0 0 13 11"><path d="M6.500 0L13 11H0z" fill="#7a7a7a"/></svg>
<svg style="left:1588px;top:1195px" width="13" height="11" viewBox="0 0 13 11"><path d="M6.500 11L13 0H0z" fill="#7a7a7a"/></svg>
<div class="a" style="left:1589px;top:607px;width:12px;height:268px;background:#808080;border-radius:6px"></div>
<svg style="left:167px;top:1225px" width="11" height="12" viewBox="0 0 11 12"><path d="M0 6L11 0v12z" fill="#7a7a7a"/></svg>
<svg style="left:1558px;top:1225px" width="11" height="12" viewBox="0 0 11 12"><path d="M11 6L0 0v12z" fill="#7a7a7a"/></svg>
<div class="a" style="left:667px;top:1225px;width:398px;height:12px;background:#808080;border-radius:6px"></div>
<!-- status -->
<div class="t" style="left:120.500px;top:1258px;font-size:19px;color:#c8c8c8;transform:scaleX(1.066)"><b style="color:#fff">Drag</b> to start painting. <b style="color:#fff">Drag</b>+<b style="color:#fff">Shift</b> to continue last stroke. <b style="color:#fff">Drag</b>+<b style="color:#fff">Alt</b> to use color picker.</div>
<svg style="left:2037px;top:1264px" width="16" height="16" viewBox="0 0 16 16"><g fill="#9a9a9a"><rect x="13" y="1" width="1.600" height="1.600"/><rect x="13" y="5" width="1.600" height="1.600"/><rect x="9" y="5" width="1.600" height="1.600"/><rect x="13" y="9" width="1.600" height="1.600"/><rect x="9" y="9" width="1.600" height="1.600"/><rect x="5" y="9" width="1.600" height="1.600"/><rect x="13" y="13" width="1.600" height="1.600"/><rect x="9" y="13" width="1.600" height="1.600"/><rect x="5" y="13" width="1.600" height="1.600"/><rect x="1" y="13" width="1.600" height="1.600"/></g></svg>
<!-- left tools -->
<svg style="left:93px;top:228px" width="64" height="1017" viewBox="93 228 64 1017">
<defs>
<linearGradient id="brs" x1="0" y1="1" x2="1" y2="0"><stop offset="0" stop-color="#8a4a18"/><stop offset=".5" stop-color="#d88a3a"/><stop offset="1" stop-color="#e8a860"/></linearGradient>
<g id="brush"><path d="M-13.500 12.500c-1-8 4-15 11-16l6 6c0 7-7 12-17 10z" fill="url(#brs)"/><path d="M-12 11c3-1 7-4 9-8M-9 12c4-2 8-5 10-9" fill="none" stroke="#6a3810" stroke-width=".9" opacity=".6"/><path d="M-2.500-3.500l6 6L12-6.500 7-11.500z" fill="#ececec"/><path d="M1-7l5 5" stroke="#b8b8b8" stroke-width="1.200"/><path d="M7-11.500l5 5 3.500-7.500c.5-1.500-.5-2.500-2-2z" fill="#e82838"/></g>
<g id="brush2"><path d="M-14 13c0-7 4-12 10-14l5 5c-1 6-6 11-15 9z" fill="url(#brs)"/><path d="M-12 11.500c3-1 7-4 9-8" fill="none" stroke="#6a3810" stroke-width=".9" opacity=".6"/><path d="M-4.500-.500l5 5 3-3-5-5z" fill="#dedede"/><path d="M-1.500-3.500l5 5L14-10.500c1.200-2-1.500-4.500-3.500-3z" fill="#e82c3c"/><path d="M1-4.500L11-13" stroke="#ff8a90" stroke-width="1" opacity=".7"/></g>
<path id="corner" d="M0 0v-8l-8 8z" fill="#e8e8e8"/>
</defs>
<!-- hand -->
<g transform="translate(125 256)"><path d="M-7 13c-4-4-8-9-8-11s2-2 4 0l3 3-3-14c-.5-2.500 2.500-3 3-.500l2.500 9-1-12c0-2.500 3-2.500 3.200 0l1 11.500 1.800-11c.4-2.300 3.300-2 3 .400l-1.500 12 3.500-7c1-2 3.500-1 2.800 1L8 5c-1 5-3 7-5 9z" fill="#f6cba4" stroke="#e8a468" stroke-width="1" stroke-linejoin="round"/></g>
<!-- move arrow -->
<g transform="translate(125 301)"><path d="M-6-12v20l4.500-4 3.500 8 3.500-1.500-3.500-8h6z" fill="#222" stroke="#f0f0f0" stroke-width="1.500" stroke-linejoin="round"/></g>
<!-- eyedropper -->
<g transform="translate(125 347)"><path d="M-13 13l2-5L2-5l3 3L-8 11z" fill="#9a9a9a" stroke="#ccc" stroke-width=".8"/><path d="M0-6l6 6 2-2-1.500-1.500c4 0 7-3 7-7s-4-6-7-4c-2 1-2.500 4-2 6L3-10z" fill="#d8942c"/><circle cx="8" cy="-8" r="4.500" fill="#e8a840"/></g>
<!-- crop -->
<g transform="translate(125 393)" fill="none" stroke="#a8a8a8" stroke-width="3.200"><path d="M-8-14v22h22M-14-8h22v22"/><path d="M-12 12L13-13" stroke-width="1.500"/></g>
<!-- selection brush -->
<g transform="translate(125 439)"><ellipse cx="-7" cy="7" rx="8" ry="6.500" fill="none" stroke="#d0d0d0" stroke-width="1.300" stroke-dasharray="3 2"/><use href="#brush"/></g>
<!-- flood select wand -->
<g transform="translate(125 485)"><path d="M-4-4l16 17" stroke="#111" stroke-width="4.500" stroke-linecap="round"/><path d="M8 9l4 4" stroke="#e8e8e8" stroke-width="3.500" stroke-linecap="round"/><path d="M-10-12l1.500 4 4 1.500-4 1.500-1.500 4-1.500-4-4-1.500 4-1.500z" fill="#f8c020"/><path d="M1-14l.800 2.200 2.200.800-2.200.800L1-8l-.800-2.200-2.200-.800 2.200-.800zM-13-2l.700 1.800 1.800.700-1.800.700-.700 1.800-.700-1.800-1.800-.700 1.800-.700z" fill="#f8a020"/></g>
<!-- marquee -->
<rect x="110.500" y="517.500" width="29" height="29" fill="none" stroke="#e8e8e8" stroke-width="1.500" stroke-dasharray="3.600 2.600"/>
<use href="#corner" x="144" y="551"/>
<!-- bucket -->
<g transform="translate(125 578)"><path d="M-6-8l12-5 8 16c1 3-12 9-15 5z" fill="#c8ccd0" stroke="#666" stroke-width="1"/><ellipse cx="0" cy="-10" rx="7" ry="3" transform="rotate(-22)" fill="#555" stroke="#e0e0e0" stroke-width="1.200"/><path d="M-5-9c-8 1-11 7-10 14s3 8 4 5c1-5 2-9 7-12z" fill="#1890e8"/><path d="M-2-14c3-5 9-3 9 1" fill="none" stroke="#333" stroke-width="1.500"/></g>
<!-- gradient / color wheel -->
<g transform="translate(125 624)"><foreignObject x="-15" y="-11" width="27" height="27"><div style="width:27px;height:27px;border-radius:50%;background:conic-gradient(#ff2020,#ff9000,#f8f000,#40e020,#20d0d0,#2060ff,#a020f0,#ff20a0,#ff2020)"></div></foreignObject><circle cx="-1.500" cy="2.500" r="6" fill="#333"/><path d="M-1.500 2.500L12-12" stroke="#f0f0f0" stroke-width="1.800"/><circle cx="-1.500" cy="2.500" r="2.600" fill="#f0f0f0"/><circle cx="12" cy="-12" r="2.400" fill="#f0f0f0"/></g>
<!-- paint brush (active) -->
<rect x="102.500" y="647.500" width="45" height="44" rx="5" fill="#242424"/>
<g transform="translate(126 670)"><use href="#brush2"/></g>
<use href="#corner" x="144" y="688"/>
<!-- color replacement brush -->
<g transform="translate(125 716)"><path d="M-2 13a11 11 0 1 1 2-21" fill="none" stroke="#e8308a" stroke-width="4.500"/><path d="M-2 13c5 0 9-3 10-7" fill="none" stroke="#20c0e8" stroke-width="3"/><g transform="translate(4 -5) scale(.85)"><use href="#brush2"/></g></g>
<!-- erase -->
<g transform="translate(125 762)"><path d="M-14 6L4-13l11 1 .500 10L-3 16z" fill="#f0b030"/><path d="M-14 6l6-6.500 11 11L-3 16z" fill="#f08080"/><path d="M-8-.500l3.500-3.500 11 11-3.500 3.500z" fill="#d8d8d8"/><path d="M4-13l11 1-12 12z" fill="#f8c848"/></g>
<use href="#corner" x="144" y="780"/>
<!-- dodge -->
<g transform="translate(125 808)"><circle cx="-3" cy="-4" r="9.500" fill="#9aa4ac"/><circle cx="-5" cy="-6" r="5" fill="#b4bcc4" opacity=".7"/><path d="M4 3l9 9" stroke="#9aa4ac" stroke-width="3.500" stroke-linecap="round"/><path d="M8 7l5 5" stroke="#7a848c" stroke-width="3.500" stroke-linecap="round"/></g>
<use href="#corner" x="144" y="826"/>
<!-- clone stamp -->
<g transform="translate(125 853)"><path d="M-4.500-13c0-3 9-3 9 0l-1.500 10h-6z" fill="#1878c8"/><ellipse cx="0" cy="-13" rx="4.500" ry="2" fill="#48a8e8"/><path d="M-2-3h4v5h-4z" fill="#c8c8c8"/><path d="M-9 4c0-3 18-3 18 0l3 5h-24z" fill="#e8a060"/><path d="M-13 9h26v3h-26z" fill="#f0c090"/><path d="M-13 12h26v1.500h-26z" fill="#b86830"/></g>
<!-- undo brush -->
<g transform="translate(125 898)"><path d="M-12 2a12 12 0 0 1 14-13" fill="none" stroke="#88a8d0" stroke-width="2.500"/><path d="M-15 0l3.500 5 4-5z" fill="#88a8d0"/><path d="M12-2a12 12 0 0 1-10 15" fill="none" stroke="#88a8d0" stroke-width="1.500" stroke-dasharray="3 2.500"/><g transform="translate(3 -2) scale(.9)"><use href="#brush2"/></g></g>
<!-- blur -->
<g transform="translate(125 946)"><path d="M0-14c4 7 8.500 12 8.500 17a8.500 8.500 0 0 1-17 0c0-5 4.500-10 8.500-17z" fill="#b8d0dc"/><path d="M-4 3c0-3 2-6 4-9" fill="none" stroke="#e8f4f8" stroke-width="2"/></g>
<use href="#corner" x="144" y="964"/>
<!-- healing -->
<g transform="translate(125 992)"><rect x="-17" y="-6.500" width="34" height="13" rx="6.500" transform="rotate(-42)" fill="#f09060"/><rect x="-6" y="-6.500" width="12" height="13" transform="rotate(-42)" fill="#f8d0b8"/></g>
<use href="#corner" x="144" y="1010"/>
<!-- pen -->
<g transform="translate(125 1038)"><path d="M-14 14l3-14 8-6 9 9-6 8z" fill="#f0b838"/><path d="M-14 14l9-9" stroke="#222" stroke-width="1.300"/><circle cx="-4.500" cy="4.500" r="2" fill="#222"/><path d="M-3-6l9 9 3-3-9-9z" fill="#e8e8e8"/><path d="M0-9l9 9 4-5c1-3-5-9-8-8z" fill="#8a3020"/><path d="M-11 0l8-6 9 9-6 8" fill="none" stroke="#6a4010" stroke-width="1"/></g>
<use href="#corner" x="144" y="1056"/>
<!-- rectangle -->
<rect x="113.500" y="1072.500" width="23" height="23" fill="#2888e0"/>
<rect x="113.500" y="1072.500" width="23" height="8" fill="#3898f0" opacity=".6"/>
<use href="#corner" x="144" y="1102"/>
<!-- text -->
<rect x="110" y="1115" width="30" height="29.500" fill="#c8c8c8" stroke="#f4f4f4" stroke-width="1.400"/>
<rect x="112.500" y="1117.500" width="25" height="24.500" fill="none" stroke="#555" stroke-width="1"/>
<path d="M115 1120h20v5h-1.500c-.500-2.200-1.500-3-4-3h-2.200v15c0 1.500.700 2 2.500 2v1.500h-9.600v-1.500c1.800 0 2.500-.500 2.500-2v-15h-2.200c-2.500 0-3.500.800-4 3H115z" fill="#000"/>
<use href="#corner" x="144" y="1148"/>
<!-- mesh warp -->
<g transform="translate(125 1176)"><path d="M-7-13c6-2 12-1 18 3 3 8 1 15-1 21-6 2-16 1-24 1 1-9 3-18 7-25z" fill="#2a3040" stroke="#c8d0d8" stroke-width="1.300"/><path d="M-11-4c7-2 14-1 21 2M-13 4c8-2 15-1 23 1M-1-14c-2 8-4 17-5 26M6-12c0 7-1 16-3 24" fill="none" stroke="#c8d0d8" stroke-width="1.200"/></g>
<use href="#corner" x="144" y="1194"/>
<!-- zoom -->
<g transform="translate(125 1221)"><path d="M4 5l9 9" stroke="#e89040" stroke-width="3.500" stroke-linecap="round"/><circle cx="-3" cy="-3" r="10" fill="#68b8f0" stroke="#f4f4f4" stroke-width="2.500"/><path d="M-9-4a6.500 6.500 0 0 1 7-6" fill="none" stroke="#c8e8ff" stroke-width="2"/></g>
</svg>
<!-- ===== right panels ===== -->
<!-- tab strips -->
<div class="a" style="left:1613px;top:228px;width:449px;height:39px;background:#262626"></div>
<div class="a" style="left:1745px;top:231px;width:60px;height:36px;background:#404040"></div>
<div class="a" style="left:1613px;top:661px;width:449px;height:40px;background:#262626"></div>
<div class="a" style="left:1753px;top:664px;width:68px;height:37px;background:#404040"></div>
<div class="a" style="left:1613px;top:953px;width:449px;height:40px;background:#262626"></div>
<div class="a" style="left:1643px;top:956px;width:97px;height:37px;background:#404040"></div>
<div class="a" style="left:1626px;top:239px;width:1.500px;height:16px;background:#5a5a5a"></div><div class="a" style="left:1630px;top:239px;width:1.500px;height:16px;background:#5a5a5a"></div>
<div class="a" style="left:1626px;top:673px;width:1.500px;height:16px;background:#5a5a5a"></div><div class="a" style="left:1630px;top:673px;width:1.500px;height:16px;background:#5a5a5a"></div>
<div class="a" style="left:1626px;top:965px;width:1.500px;height:16px;background:#5a5a5a"></div><div class="a" style="left:1630px;top:965px;width:1.500px;height:16px;background:#5a5a5a"></div>
<div class="t pt" style="left:1650.5px;top:238px;transform:scaleX(1.012)">Histogram</div>
<div class="t pt pta" style="left:1752px;top:238px;transform:scaleX(1.011)">Color</div>
<div class="t pt" style="left:1812px;top:238px;transform:scaleX(0.938)">Swatches</div>
<div class="t pt" style="left:1903px;top:238px;transform:scaleX(0.934)">Brushes</div>
<div class="t pt" style="left:1650.5px;top:672px;transform:scaleX(1.011)">Adjustment</div>
<div class="t pt pta" style="left:1760.5px;top:672px;transform:scaleX(0.920)">Layers</div>
<div class="t pt" style="left:1828px;top:672px;transform:scaleX(0.946)">Effects</div>
<div class="t pt" style="left:1897px;top:672px;transform:scaleX(0.930)">Styles</div>
<div class="t pt" style="left:1959.5px;top:672px;transform:scaleX(0.967)">Stock</div>
<div class="t pt pta" style="left:1650.5px;top:964px;transform:scaleX(1.019)">Navigator</div>
<div class="t pt" style="left:1746.5px;top:964px;transform:scaleX(0.976)">Transform</div>
<div class="t pt" style="left:1844.5px;top:964px;transform:scaleX(1.000)">History</div>
<div class="t pt" style="left:1918px;top:964px;transform:scaleX(0.955)">Channels</div>
<svg style="left:2033px;top:240px" width="21" height="14" viewBox="0 0 21 14"><path d="M0 1h13M0 4.300h13M0 7.600h13M0 11h13" stroke="#e8e8e8" stroke-width="1.600"/><path d="M15.500 10.500h5l-2.500 3z" fill="#e8e8e8"/></svg>
<svg style="left:2033px;top:673px" width="21" height="14" viewBox="0 0 21 14"><path d="M0 1h13M0 4.300h13M0 7.600h13M0 11h13" stroke="#e8e8e8" stroke-width="1.600"/><path d="M15.500 10.500h5l-2.500 3z" fill="#e8e8e8"/></svg>
<svg style="left:2033px;top:965px" width="21" height="14" viewBox="0 0 21 14"><path d="M0 1h13M0 4.300h13M0 7.600h13M0 11h13" stroke="#e8e8e8" stroke-width="1.600"/><path d="M15.500 10.500h5l-2.500 3z" fill="#e8e8e8"/></svg>
<!-- colour wells -->
<div class="a" style="left:1657px;top:314px;width:44px;height:44px;border-radius:50%;background:#000;box-shadow:0 0 0 2px #333"></div>
<div class="a" style="left:1640px;top:297px;width:40px;height:40px;border-radius:50%;background:#fff;box-shadow:0 0 0 2.500px #333"></div>
<svg style="left:1640px;top:338px" width="19" height="19" viewBox="0 0 19 19"><circle cx="9.500" cy="9.500" r="8.500" fill="#fff" stroke="#333" stroke-width="1.500"/><path d="M3.500 15.500l12-12" stroke="#f02020" stroke-width="1.800"/></svg>
<svg style="left:1680px;top:295px" width="20" height="22" viewBox="0 0 20 22"><path d="M3 7c3-5 9-4 12 6" fill="none" stroke="#c0c0c0" stroke-width="1.700"/><path d="M1 6l2-5 4 4zM13 15l5-1-2 5z" fill="none" stroke="#c0c0c0" stroke-width="1.400"/></svg>
<svg style="left:1716px;top:292px" width="32" height="32" viewBox="-16 -16 32 32"><path d="M-13 13l2-5L2-5l3 3L-8 11z" fill="#9a9a9a" stroke="#ccc" stroke-width=".8"/><path d="M0-6l6 6 2-2-1.500-1.500c4 0 7-3 7-7s-4-6-7-4c-2 1-2.500 4-2 6L3-10z" fill="#b8802c"/><circle cx="8" cy="-8" r="4.500" fill="#d8a040"/></svg>
<div class="a" style="left:1751.500px;top:295.500px;width:23px;height:23px;border-radius:50%;background:#f00;box-shadow:0 0 0 1.500px #333"></div>
<div class="a" style="left:1875px;top:334px;width:30px;height:30px;background:#2c2c2c"></div>
<svg style="left:1882px;top:340px" width="14" height="18" viewBox="0 0 14 18"><path d="M3.500 8V5a3.500 3.500 0 0 1 7 0v3" fill="none" stroke="#a8a8a8" stroke-width="1.800"/><rect x="1" y="8" width="12" height="9" rx="1" fill="#a8a8a8"/></svg>
<div class="a vb" style="left:1912px;top:335px;width:133px;height:27px;background:#383838"></div>
<div class="t" style="left:1919.5px;top:340px;font-size:17.500px;color:#e8e8e8;transform:scaleX(0.816)">RGB</div>
<div class="a arr" style="left:2026px;top:346px"></div>
<!-- sliders -->
<div class="t vt" style="left:1637.5px;top:378px;font-size:18.500px;transform:scaleX(0.763)">R:</div>
<div class="t vt" style="left:1635.5px;top:418px;font-size:18.500px;transform:scaleX(0.825)">G:</div>
<div class="t vt" style="left:1637.5px;top:458px;font-size:18.500px;transform:scaleX(0.853)">B:</div>
<div class="a" style="left:1659px;top:381px;width:309px;height:13px;border-radius:7px;background:linear-gradient(90deg,#00ffff,#ffffff);box-shadow:0 0 0 1px #333"></div>
<div class="a" style="left:1659px;top:421px;width:309px;height:13px;border-radius:7px;background:linear-gradient(90deg,#ff00ff,#ffffff);box-shadow:0 0 0 1px #333"></div>
<div class="a" style="left:1659px;top:461px;width:309px;height:13px;border-radius:7px;background:linear-gradient(90deg,#ffff00,#ffffff);box-shadow:0 0 0 1px #333"></div>
<div class="a" style="left:1950.500px;top:378px;width:19px;height:19px;border-radius:50%;border:2.500px solid #fff;box-shadow:0 0 0 1px #444,inset 0 0 0 1px #444"></div>
<div class="a" style="left:1950.500px;top:418px;width:19px;height:19px;border-radius:50%;border:2.500px solid #fff;box-shadow:0 0 0 1px #444,inset 0 0 0 1px #444"></div>
<div class="a" style="left:1950.500px;top:458px;width:19px;height:19px;border-radius:50%;border:2.500px solid #fff;box-shadow:0 0 0 1px #444,inset 0 0 0 1px #444"></div>
<div class="a vb" style="left:1978px;top:372px;width:67px;height:32px"></div><div class="t vt" style="left:1987.5px;top:378px;transform:scaleX(0.924)">255</div>
<div class="a vb" style="left:1978px;top:412px;width:67px;height:32px"></div><div class="t vt" style="left:1987.5px;top:418px;transform:scaleX(0.924)">255</div>
<div class="a vb" style="left:1978px;top:452px;width:67px;height:32px"></div><div class="t vt" style="left:1987.5px;top:458px;transform:scaleX(0.924)">255</div>
<!-- spectrum -->
<div class="a" style="left:1635px;top:497px;width:411px;height:88px;background:linear-gradient(90deg,#f00 0,#ff0 17%,#0f0 33%,#0ff 50%,#00f 67%,#f0f 84%,#f00 100%);box-shadow:0 0 0 1px #2a2a2a"></div>
<div class="a" style="left:1635px;top:497px;width:411px;height:88px;background:linear-gradient(180deg,#fff 0,rgba(255,255,255,0) 50%,rgba(0,0,0,0) 50%,#000 97%)"></div>
<div class="t" style="left:1635.5px;top:594px;font-size:18px;color:#e8e8e8;transform:scaleX(0.934)">Opacity</div>
<div class="a" style="left:1644px;top:620px;width:23px;height:23px;border-radius:50%;background:#fff;box-shadow:0 0 0 1.500px #333"></div>
<div class="a" style="left:1679px;top:626px;width:250px;height:13px;border-radius:7px;background:linear-gradient(90deg,rgba(255,255,255,1),rgba(255,255,255,0) 96%),repeating-conic-gradient(#6a6a6a 0 25%,#4a4a4a 0 50%) 0 0/13px 13px"></div>
<div class="a" style="left:1911px;top:622.500px;width:19px;height:19px;border-radius:50%;border:2.500px solid #fff;background:#3a3a3a"></div>
<div class="a vb" style="left:1938px;top:614px;width:100px;height:32px"></div>
<div class="a" style="left:2012px;top:615px;width:1px;height:30px;background:#444"></div>
<div class="t vt" style="left:1948.5px;top:621px;transform:scaleX(0.877)">100 %</div>
<div class="a arr" style="left:2019.500px;top:626px"></div>
<!-- layers header -->
<div class="t" style="left:1625.5px;top:715px;font-size:18.500px;color:#e8e8e8;transform:scaleX(0.904)">Opacity:</div>
<div class="a vb" style="left:1693px;top:708px;width:125px;height:33px"></div><div class="t vt" style="left:1703px;top:715px;font-size:19px;transform:scaleX(0.935)">100 %</div><div class="a arr" style="left:1800px;top:721px"></div>
<div class="a vb" style="left:1825px;top:708px;width:155px;height:33px;background:#383838"></div><div class="t vt" style="left:1833px;top:715px;font-size:19px;transform:scaleX(1.000)">Normal</div><div class="a arr" style="left:1962px;top:721px"></div>
<svg style="left:1988px;top:713px" width="22" height="22" viewBox="-11 -11 22 22"><g fill="#a8a8a8"><circle r="7"/><g id="gt"><rect x="-2" y="-10.500" width="4" height="21"/></g><use href="#gt" transform="rotate(45)"/><use href="#gt" transform="rotate(90)"/><use href="#gt" transform="rotate(135)"/></g><circle r="3" fill="#404040"/></svg>
<svg style="left:2029px;top:712px" width="15" height="21" viewBox="0 0 15 21"><path d="M3.500 9V6a4 4 0 0 1 8 0v3" fill="none" stroke="#a8a8a8" stroke-width="2"/><rect x="1" y="9" width="13" height="11" rx="1.500" fill="#a8a8a8"/></svg>
<!-- layers list -->
<div class="a" style="left:1613px;top:746px;width:418px;height:168px;background:#383838;overflow:hidden">
  <div class="a" style="left:0;top:52px;width:418px;height:2px;background:#1a1a1a"></div>
  <div class="a" style="left:0;top:104px;width:418px;height:2px;background:#1a1a1a"></div>
  <div class="a" style="left:0;top:155px;width:418px;height:2px;background:#1a1a1a"></div>
  <div class="a" style="left:0;top:157px;width:418px;height:12px;background:#5f8cd4"></div>
  <div class="a" style="left:34px;top:4px;width:47px;height:46px;background:#222;border:1px solid #1a1a1a"></div>
  <div class="a" style="left:37px;top:21px;width:42px;height:13px;border-radius:7px 6px 6px 8px;background:#fff"></div>
  <div class="a" style="left:34px;top:56px;width:47px;height:46px;background:#fff;border:1px solid #1a1a1a"></div>
  <div class="a" style="left:34px;top:108px;width:47px;height:46px;background:#222;border:1px solid #1a1a1a"></div>
  <div class="a" style="left:35px;top:116px;width:45px;height:31px;background:#fff"></div>
  <div class="a" style="left:34px;top:160px;width:47px;height:12px;background:#fff;border:1px solid #1a1a1a"></div>
  <svg style="left:35px;top:57px" width="45" height="44" viewBox="0 0 45 44"><g fill="none" stroke="#555" stroke-width=".9"><path d="M3 8h26M16 6v10M36 6v12M10 10v14M7 14h7M7 18h7M7 21h7M33 10h7M33 13h7M33 16h7M22 8v8h10M4 26h12v10H4zM20 20h8M6 40h10M24 24h4"/></g></svg>
  <svg style="left:35px;top:116px" width="45" height="31" viewBox="0 0 45 31"><g fill="none" stroke="#333" stroke-width="1.400"><path d="M6 4v24M6 15h36M23 4v25M41 6v23M6 4h5M23 4h5M18 28h5M36 28h5"/></g><g fill="none" stroke="#777" stroke-width="1"><circle cx="14" cy="8" r="2.500"/><circle cx="32" cy="8" r="2.500"/><circle cx="14" cy="24" r="2.500"/><circle cx="32" cy="24" r="2.500"/><path d="M7 12h15M24 12h16M7 18h15M24 18h16"/></g></svg>
  <div class="t" style="left:87.500px;top:19px;font-size:19px;color:#c4c4c4;transform:scaleX(0.981)">(Pixel)</div>
  <div class="t" style="left:87px;top:70px;font-size:19px;color:#c4c4c4;transform:scaleX(1.032)"><b style="color:#fff;font-size:19.500px">Office 1</b> (Image)</div>
  <div class="t" style="left:87.500px;top:122px;font-size:19px;color:#c4c4c4;transform:scaleX(0.981)">(Pixel)</div>
  <div class="a" style="left:392px;top:17px;width:19px;height:19px;border:1.500px solid #d8d8d8;border-radius:4px;background:#3c3c3c"></div>
  <div class="a" style="left:392px;top:69px;width:19px;height:19px;border:1.500px solid #d8d8d8;border-radius:4px;background:#3c3c3c"></div>
  <div class="a" style="left:392px;top:120px;width:19px;height:19px;border:1.500px solid #d8d8d8;border-radius:4px;background:#3c3c3c"></div>
  <svg style="left:395px;top:20px" width="14" height="13" viewBox="0 0 14 13"><path d="M1.500 7l3.500 4.500L12.500 1" fill="none" stroke="#f4f4f4" stroke-width="2.400"/></svg>
  <svg style="left:395px;top:123px" width="14" height="13" viewBox="0 0 14 13"><path d="M1.500 7l3.500 4.500L12.500 1" fill="none" stroke="#f4f4f4" stroke-width="2.400"/></svg>
</div>
<svg style="left:2040px;top:757px" width="13" height="11" viewBox="0 0 13 11"><path d="M6.500 0L13 11H0z" fill="#6a6a6a"/></svg>
<svg style="left:2040px;top:893px" width="13" height="11" viewBox="0 0 13 11"><path d="M6.500 11L13 0H0z" fill="#6a6a6a"/></svg>
<div class="a" style="left:2041px;top:779px;width:12px;height:78px;background:#6a6a6a;border-radius:6px"></div>
<!-- layers bottom toolbar -->
<div class="a" style="left:1621px;top:915px;width:34px;height:33px;background:#2c2c2c"></div>
<svg style="left:1624px;top:920px" width="28" height="22" viewBox="0 0 28 22"><path d="M1 2l13 6 13-6v4l-13 6L1 6zM1 9l13 6 13-6v4l-13 6L1 13z" fill="#b0b0b0"/></svg>
<svg style="left:1774px;top:921px" width="24" height="21" viewBox="0 0 24 21"><rect width="24" height="21" fill="#a0a0a0"/><circle cx="12" cy="10.500" r="6.500" fill="#404040"/></svg>
<svg style="left:1811px;top:921px" width="22" height="22" viewBox="0 0 22 22"><circle cx="11" cy="11" r="9.500" fill="none" stroke="#a0a0a0" stroke-width="2"/><path d="M15 2.500a9.500 9.500 0 0 1-9 17z" fill="#a0a0a0"/></svg>
<div class="t" style="left:1848px;top:919px;font-size:24px;font-family:'Liberation Serif',serif;font-style:italic;color:#a0a0a0;letter-spacing:-1px">fx</div>
<svg style="left:1887px;top:922px" width="17" height="20" viewBox="0 0 17 20"><path d="M0 0h17L10.500 10 17 20H0l6.500-10z" fill="#a0a0a0"/></svg>
<svg style="left:1952px;top:922px" width="23" height="19" viewBox="0 0 23 19"><path d="M0 1h8l2 3h13v15H0z" fill="#a0a0a0"/><path d="M0 5.500h23" stroke="#404040" stroke-width="1"/></svg>
<div class="a" style="left:1990px;top:922px;width:18px;height:20px;background:repeating-conic-gradient(#a0a0a0 0 25%,#404040 0 50%) 0 0/9px 10px;box-shadow:0 0 0 1.500px #a0a0a0"></div>
<svg style="left:2029px;top:920px" width="16" height="22" viewBox="0 0 16 22"><path d="M0 4h16M5 4V1.500h6V4" stroke="#a0a0a0" stroke-width="2" fill="none"/><path d="M1.500 6h13l-1 15h-11z" fill="#a0a0a0"/><path d="M5.500 8.500v10M8 8.500v10M10.500 8.500v10" stroke="#404040" stroke-width="1.200"/></svg>
<!-- navigator -->
<div class="t" style="left:1628.5px;top:1008px;font-size:19px;color:#e8e8e8;transform:scaleX(0.981)">Zoom:</div>
<svg style="left:1687px;top:1006px" width="28" height="28" viewBox="0 0 28 28"><circle cx="14" cy="14" r="12.500" fill="none" stroke="#e0e0e0" stroke-width="1.600"/><path d="M8 14h12" stroke="#e0e0e0" stroke-width="1.600"/></svg>
<svg style="left:2017px;top:1003px" width="28" height="28" viewBox="0 0 28 28"><circle cx="14" cy="14" r="12.500" fill="none" stroke="#e0e0e0" stroke-width="1.600"/><path d="M8 14h12M14 8v12" stroke="#e0e0e0" stroke-width="1.600"/></svg>
<div class="a" style="left:1723px;top:1010px;width:204px;height:9px;border-radius:5px;background:#383838;box-shadow:0 0 0 1px #333"></div>
<div class="a" style="left:1725px;top:1011px;width:158px;height:7px;border-radius:4px;background:#5f8cd4"></div>
<svg style="left:1875px;top:1005px" width="16" height="18" viewBox="0 0 16 18"><defs><linearGradient id="thg" x1="0" y1="0" x2="0" y2="1"><stop offset="0" stop-color="#f0f0f0"/><stop offset="1" stop-color="#909090"/></linearGradient></defs><path d="M1 1h14v10l-7 6.500L1 11z" fill="url(#thg)" stroke="#777" stroke-width=".8"/></svg>
<svg style="left:1723px;top:1025px" width="204" height="5" viewBox="0 0 204 5"><path d="M6 0v5M17 0v5M39.500 0v5M71 0v5M81.500 0v5M102 0v5M123 0v5M152 0v5M163 0v5M175.500 0v5M196.500 0v5" stroke="#9a9a9a" stroke-width="1.500"/></svg>
<div class="a vb" style="left:1928px;top:1000px;width:83px;height:33px"></div>
<div class="t vt" style="left:1938px;top:1008px;font-size:19px;transform:scaleX(0.935)">185 %</div>
<div class="a" style="left:1613px;top:1039px;width:449px;height:2px;background:#2c2c2c"></div>
<div class="a" style="left:1673px;top:1051px;width:328px;height:185px;background:#fff"></div>
<!-- ===== FLOOR PLAN ===== -->
<svg style="left:0;top:0" width="2560" height="1440" viewBox="0 0 2560 1440"><defs>
<g id="plant" fill="#808080" stroke="#1a1a1a" stroke-width=".7"><path d="M0 0C-4.0 -5.4 -3.6 -14.4 0 -18.0C3.6 -14.4 4.0 -5.4 0 0Z" transform="rotate(0)"/><path d="M0 0C-3.2 -4.4 -3.0 -11.8 0 -14.8C3.0 -11.8 3.2 -4.4 0 0Z" transform="rotate(22)"/><path d="M0 0C-4.0 -5.4 -3.6 -14.4 0 -18.0C3.6 -14.4 4.0 -5.4 0 0Z" transform="rotate(45)"/><path d="M0 0C-3.2 -4.4 -3.0 -11.8 0 -14.8C3.0 -11.8 3.2 -4.4 0 0Z" transform="rotate(68)"/><path d="M0 0C-4.0 -5.4 -3.6 -14.4 0 -18.0C3.6 -14.4 4.0 -5.4 0 0Z" transform="rotate(90)"/><path d="M0 0C-3.2 -4.4 -3.0 -11.8 0 -14.8C3.0 -11.8 3.2 -4.4 0 0Z" transform="rotate(112)"/><path d="M0 0C-4.0 -5.4 -3.6 -14.4 0 -18.0C3.6 -14.4 4.0 -5.4 0 0Z" transform="rotate(135)"/><path d="M0 0C-3.2 -4.4 -3.0 -11.8 0 -14.8C3.0 -11.8 3.2 -4.4 0 0Z" transform="rotate(158)"/><path d="M0 0C-4.0 -5.4 -3.6 -14.4 0 -18.0C3.6 -14.4 4.0 -5.4 0 0Z" transform="rotate(180)"/><path d="M0 0C-3.2 -4.4 -3.0 -11.8 0 -14.8C3.0 -11.8 3.2 -4.4 0 0Z" transform="rotate(202)"/><path d="M0 0C-4.0 -5.4 -3.6 -14.4 0 -18.0C3.6 -14.4 4.0 -5.4 0 0Z" transform="rotate(225)"/><path d="M0 0C-3.2 -4.4 -3.0 -11.8 0 -14.8C3.0 -11.8 3.2 -4.4 0 0Z" transform="rotate(248)"/><path d="M0 0C-4.0 -5.4 -3.6 -14.4 0 -18.0C3.6 -14.4 4.0 -5.4 0 0Z" transform="rotate(270)"/><path d="M0 0C-3.2 -4.4 -3.0 -11.8 0 -14.8C3.0 -11.8 3.2 -4.4 0 0Z" transform="rotate(292)"/><path d="M0 0C-4.0 -5.4 -3.6 -14.4 0 -18.0C3.6 -14.4 4.0 -5.4 0 0Z" transform="rotate(315)"/><path d="M0 0C-3.2 -4.4 -3.0 -11.8 0 -14.8C3.0 -11.8 3.2 -4.4 0 0Z" transform="rotate(338)"/><circle r="1.8" fill="#222"/></g>
<g id="cch" stroke="#444" stroke-width=".8"><path d="M-7.500 6.500v-8c0-2 15-2 15 0v8z" fill="#d8d8d8"/><rect x="-10.500" y="-6.500" width="21" height="5" rx="2.500" fill="#9a9a9a"/><path d="M-9-4h18" stroke="#555" stroke-width=".8"/></g>
<g id="och" stroke="#333" stroke-width=".9"><path d="M-10-4c0-13 20-13 20 0" fill="#b0b0b0"/><path d="M-12-3c0-2 3.500-2 3.500 0v11c0 2-3.500 2-3.500 0zM8.500-3c0-2 3.500-2 3.500 0v11c0 2-3.500 2-3.500 0z" fill="#888"/><path d="M-8 12c-1-8 2-15 8-18 6 3 9 10 8 18-2 2.500-14 2.500-16 0z" fill="#c4c4c4"/><path d="M-6 13l-2 2M6 13l2 2" stroke-width="1.600"/><rect x="-2" y="-9" width="4" height="4" fill="#666"/></g>
<g id="odesk" stroke="#444" stroke-width="1"><rect x="58" y="-37" width="27" height="37.500" fill="#c0c0c0"/><rect x="0" y="0" width="85" height="34" rx="1.500" fill="#c0c0c0"/><path d="M4 0c0-2 16-2 18 0" fill="#999"/><rect x="28" y="5" width="18" height="7" fill="#e8e8e8"/><path d="M31 6.500v4M35 6.500v4M39 6.500v4M43 6.500v4" stroke="#333" stroke-width="1.300"/><rect x="27" y="15" width="20" height="6" rx="2" fill="#d8d8d8"/><path d="M29 21c0 9 16 9 16 0z" fill="#d4d4d4"/><path d="M30 24h14M31 27h12M33 30h8" stroke-width=".8"/><g transform="translate(7.500 22)" fill="#777" stroke="#222" stroke-width=".6"><path d="M0 0l-5-4 3 0z M0 0l5-4-1 3zM0 0l6 3-4 0zM0 0l-2 6-1-4zM0 0l-6 2 3-3z"/></g></g>
<g id="btable"><use href="#cch" x="22.500" y="-2.500"/><use href="#cch" transform="translate(22.500 50.500) rotate(180)"/><use href="#cch" transform="translate(-3 24) rotate(-90)"/><use href="#cch" transform="translate(48.500 24) rotate(90)"/><rect x="0" y="0" width="45.500" height="48" rx="11" fill="#f2f2f2" stroke="#555" stroke-width="1"/></g>
<g id="qch" stroke="#333" stroke-width=".9"><path d="M-12.500 1.500l-2.500 1 1 3 2.500-1zM-3 11.500l-1 3 3 .5 .5-3zM6 8l3 3.500 2.500-2.500-3-3z" fill="#555"/><circle r="10.500" fill="#d8d8d8"/><path d="M-4.500-14.800A15.500 15.500 0 0 1 14.800 4.500L10.800 3.200A11.300 11.300 0 0 0-3.200-10.800Z" fill="#d0d0d0" stroke-width="1.200"/><path d="M-6-9.500l-3.500 3M9.500 6l-3 3.500" stroke-width="2.400" stroke="#555"/></g>
<g id="kb" stroke="#444" stroke-width=".8"><rect x="-10" y="-5" width="20" height="10" fill="#9c9c9c"/><rect x="-8" y="-3" width="16" height="6" fill="#c8c8c8"/><path d="M-6-3v6M-2-3v6M2-3v6M6-3v6M-8 0h16" stroke-width=".6"/><path d="M-9 7c4 3 14 3 18 0" fill="none" stroke-width="1.600" stroke="#666"/></g>
<g id="cu"><path d="M2.500 2.500H24V32c0 12 8 20 20 20h54v23H2.500z" fill="#d8d8d8" stroke="#555" stroke-width="1"/><path d="M2.500 32.500H24M45 52v23" fill="none" stroke="#555" stroke-width="1"/><path d="M53 75V60.500h44.500V75" fill="none" stroke="#555" stroke-width="1"/><path d="M55.500 75V63h40v12" fill="none" stroke="#777" stroke-width=".8"/><path d="M2.500 13a3.500 3.500 0 0 1 0 7zM2.500 42a5 5 0 0 1 0 10zM20 75a6 5 0 0 1 12 0z" fill="#fff" stroke="#555" stroke-width=".8"/><path d="M2.500 79h95.500v72H78v-30c0-12-8-20-20-20H2.500z" fill="#d8d8d8" stroke="#555" stroke-width="1"/><path d="M78 121h20M55.500 79v22" fill="none" stroke="#555" stroke-width="1"/><path d="M3.500 79v14.500H49V79" fill="none" stroke="#555" stroke-width="1"/><path d="M6 79v12h40.500V79" fill="none" stroke="#777" stroke-width=".8"/><path d="M98 92a5 5 0 0 0 0 10zM98 130a3.500 3.500 0 0 0 0 7zM70 79a6 5 0 0 0 12 0z" fill="#fff" stroke="#555" stroke-width=".8"/><use href="#kb" transform="translate(21 52.500) rotate(40)"/><use href="#kb" transform="translate(80.500 101) rotate(220)"/><use href="#qch" x="49" y="23"/><use href="#qch" transform="translate(52.500 130) rotate(180)"/></g>
<g id="cl"><use href="#cu"/><use href="#cu" x="100.300"/><g stroke="#000" stroke-width="5" fill="none"><path d="M0 0v150M0 .500h32M0 77h200.600M100.300 0v154M100.300 .500h32M66 154h34.300M200.600 4v150M166.300 154h34.300"/></g><g fill="#d0d0d0" stroke="#444" stroke-width=".8"><circle cx="-.500" cy="-.500" r="3.200"/><circle cx="99.800" cy="-.500" r="3.200"/><circle cx="0" cy="77" r="3.600"/><circle cx="100.300" cy="77" r="3.600"/><circle cx="200.600" cy="77" r="3.600"/><circle cx="100.800" cy="154.500" r="3.200"/><circle cx="201.100" cy="154.500" r="3.200"/></g></g>
<clipPath id="cl4clip"><rect x="-6" y="-6" width="203.500" height="170"/></clipPath>
</defs>
<g id="fp">
<rect x="315" y="517" width="173.500" height="24.500" fill="#c0c0c0" stroke="#666" stroke-width="1"/>
<use href="#plant" x="289.500" y="539.500"/><use href="#plant" x="514" y="1138.500"/>
<use href="#cch" x="361.7" y="600.500"/>
<use href="#cch" transform="translate(361.7 801) rotate(180)"/>
<use href="#cch" x="389.0" y="600.500"/>
<use href="#cch" transform="translate(389.0 801) rotate(180)"/>
<use href="#cch" transform="translate(324.500 635.8) rotate(-90)"/>
<use href="#cch" transform="translate(422.300 635.8) rotate(90)"/>
<use href="#cch" transform="translate(324.500 669.0) rotate(-90)"/>
<use href="#cch" transform="translate(422.300 669.0) rotate(90)"/>
<use href="#cch" transform="translate(324.500 702.5) rotate(-90)"/>
<use href="#cch" transform="translate(422.300 702.5) rotate(90)"/>
<use href="#cch" transform="translate(324.500 735.8) rotate(-90)"/>
<use href="#cch" transform="translate(422.300 735.8) rotate(90)"/>
<use href="#cch" transform="translate(324.500 769.0) rotate(-90)"/>
<use href="#cch" transform="translate(422.300 769.0) rotate(90)"/>
<rect x="331" y="605.500" width="85" height="189" rx="16" fill="#f2f2f2" stroke="#555" stroke-width="1.100"/>
<use href="#odesk" x="555.5" y="577"/>
<use href="#och" x="592.5" y="559"/>
<use href="#odesk" x="744.0" y="577"/>
<use href="#och" x="782.8" y="559"/>
<use href="#odesk" x="925.0" y="577"/>
<use href="#och" x="964.0" y="559"/>
<use href="#btable" x="1059.800" y="555.300"/><use href="#btable" x="1162" y="555.300"/>
<rect x="1275.500" y="523" width="29" height="36.500" fill="#dcdcdc" stroke="#666" stroke-width="1"/><path d="M1278 523v36.500" stroke="#888" stroke-width="1.500"/><path d="M1274.500 538v6" stroke="#333" stroke-width="2"/>
<rect x="1280.500" y="570" width="24" height="81" fill="#bcbcbc" stroke="#555" stroke-width="1"/><rect x="1286.500" y="573" width="13" height="18.500" fill="#f4f4f4" stroke="#555" stroke-width="1"/><path d="M1286.500 573v18.500" stroke="#777" stroke-width="2.500"/><rect x="1282" y="596" width="21" height="31" fill="#c8c8c8" stroke="#666" stroke-width=".9"/><rect x="1284.500" y="599" width="15" height="25" rx="3.500" fill="#c0c0c0" stroke="#666" stroke-width=".9"/><circle cx="1291.500" cy="611.500" r="1.300" fill="none" stroke="#444" stroke-width=".7"/><path d="M1296 605l5 5M1300.500 606v16" stroke="#555" stroke-width="1.600"/>
<path d="M283 891v-13l12-6.500h13l12 6.500v13M283 878h37" fill="#fff" stroke="#666" stroke-width=".9"/>
<path d="M339 891v-13l12-6.500h13l12 6.500v13M339 878h37" fill="#fff" stroke="#666" stroke-width=".9"/>
<path d="M395 891v-13l12-6.500h13l12 6.500v13M395 878h37" fill="#fff" stroke="#666" stroke-width=".9"/>
<rect x="434.500" y="894" width="18" height="18.500" fill="#d8d8d8" stroke="#666" stroke-width=".9"/><circle cx="443.500" cy="903" r="7.500" fill="#8c8c8c" stroke="#555" stroke-width=".8"/><rect x="440.500" y="912.500" width="6" height="5.500" fill="#ddd" stroke="#555" stroke-width=".9"/>
<path d="M384 925h16c0 24-18 42-42.500 42.500v-16c15-.500 26.500-12 26.500-26.500z" fill="#bcbcbc" stroke="#666" stroke-width="1"/>
<g transform="translate(369.500 936) rotate(-35)"><rect x="-7.500" y="-7" width="15" height="13" rx="3" fill="#fff" stroke="#555" stroke-width=".9"/><rect x="-5" y="-3" width="10" height="6" rx="1.500" fill="none" stroke="#777" stroke-width=".7"/></g>
<rect x="363" y="954" width="6" height="6" fill="#888" stroke="#444" stroke-width=".7" transform="rotate(-10 366 957)"/><g transform="translate(381 946) rotate(-45)"><rect x="-6" y="-3" width="12" height="6" fill="#eee" stroke="#444" stroke-width=".7"/><path d="M-4-3v6M-1-3v6M2-3v6" stroke="#444" stroke-width=".6"/></g><g transform="translate(393 929)" fill="#555" stroke="#111" stroke-width=".5"><path d="M0 0l-4-3 2 0zM0 0l4-3-1 2zM0 0l4 3-3 0zM0 0l-1 5-1-3zM0 0l-4 2 2-2z"/></g>
<g stroke="#444" stroke-width=".9"><rect x="465" y="1001.0" width="22" height="22.500" rx="4" fill="#d4d4d4"/><rect x="483" y="1000.3" width="4.500" height="24" rx="1.500" fill="#a0a0a0"/><path d="M467 1003.5h14M467 1021.0h14" stroke="#777"/></g>
<g stroke="#444" stroke-width=".9"><rect x="465" y="1031.5" width="22" height="22.500" rx="4" fill="#d4d4d4"/><rect x="483" y="1030.8" width="4.500" height="24" rx="1.500" fill="#a0a0a0"/><path d="M467 1034.0h14M467 1051.5h14" stroke="#777"/></g>
<g stroke="#333" fill="none">
<path d="M329 1086.0H378" stroke-width="2.400" stroke="#444"/><path d="M329 1086.0H378" stroke-width=".8" stroke="#ccc"/>
<path d="M329 1111.5H378" stroke-width="2.400" stroke="#444"/><path d="M329 1111.5H378" stroke-width=".8" stroke="#ccc"/>
<path d="M329 1136.5H378" stroke-width="2.400" stroke="#444"/><path d="M329 1136.5H378" stroke-width=".8" stroke="#ccc"/>
<path d="M329 1160.5H378" stroke-width="2.400" stroke="#444"/><path d="M329 1160.5H378" stroke-width=".8" stroke="#ccc"/>
<rect x="348.500" y="1088.0" width="5.500" height="4.500" fill="#ddd" stroke-width=".9"/>
<path d="M378 1087.5v23M378 1087.5c-10 .5-18 7-19 21.500" stroke-width=".8" stroke="#555"/><path d="M361 1108.5h17" stroke-width="2" stroke="#999"/>
<rect x="348.500" y="1113.5" width="5.500" height="4.500" fill="#ddd" stroke-width=".9"/>
<path d="M378 1113.0v23M378 1113.0c-10 .5-18 7-19 21.500" stroke-width=".8" stroke="#555"/><path d="M361 1134.0h17" stroke-width="2" stroke="#999"/>
<rect x="348.500" y="1138.5" width="5.500" height="4.500" fill="#ddd" stroke-width=".9"/>
<path d="M378 1138.0v23M378 1138.0c-10 .5-18 7-19 21.500" stroke-width=".8" stroke="#555"/><path d="M361 1159.0h17" stroke-width="2" stroke="#999"/>
</g>
<rect x="465.500" y="1089.500" width="22.500" height="72.500" fill="#e8e8e8" stroke="#777" stroke-width="1"/>
<ellipse cx="476.500" cy="1109.0" rx="7.500" ry="9" fill="#f4f4f4" stroke="#444" stroke-width="1"/><ellipse cx="476.500" cy="1109.0" rx="5.500" ry="7" fill="none" stroke="#777" stroke-width=".7"/><path d="M476.500 1109.0h6" stroke="#333" stroke-width="1.600"/><circle cx="476" cy="1109.0" r="1" fill="#333"/>
<ellipse cx="476.500" cy="1141.8" rx="7.500" ry="9" fill="#f4f4f4" stroke="#444" stroke-width="1"/><ellipse cx="476.500" cy="1141.8" rx="5.500" ry="7" fill="none" stroke="#777" stroke-width=".7"/><path d="M476.500 1141.8h6" stroke="#333" stroke-width="1.600"/><circle cx="476" cy="1141.8" r="1" fill="#333"/>
<g stroke="#555" stroke-width=".9"><rect x="570.500" y="1139.500" width="38.500" height="23" fill="#e0e0e0"/><rect x="575" y="1146" width="25" height="15" fill="#a8a8a8"/><path d="M573 1142h22" stroke="#333" stroke-width="1.600"/><rect x="608" y="1145" width="9" height="10" fill="#c8c8c8"/><path d="M571 1146c-4-1-6 2-4 5 1 3 0 6-1 8 2 2 4 2 5 1" fill="#ddd"/></g>
<use href="#cl" x="588.5" y="772.0"/>
<use href="#cl" x="825.4" y="772.3"/>
<use href="#cl" x="1059.9" y="772.0"/>
<use href="#cl" x="1058.4" y="976.5"/>
<g clip-path="url(#cl4clip)" transform="translate(825.400 975.500)"><use href="#cl"/></g><path d="M1022.500 979v50" stroke="#999" stroke-width=".8"/>
<g fill="none" stroke="#444" stroke-width="1">
<path d="M532.500 651V626.500M532.500 626.500A27.500 24.500 0 0 0 505 651"/>
<path d="M731.500 651V626.500M731.500 626.500A27.500 24.500 0 0 0 704 651"/>
<path d="M876 651V626.500M876 626.500A27.500 24.500 0 0 1 903.500 651"/>
<path d="M490 660H459.500M459.500 660A30 30 0 0 0 487 689.500M490 719H459.500M459.500 719A30 30 0 0 1 487 689.500"/>
<path d="M490 808.500H460M460 808.500A30 30 0 0 0 486 837.500M490 868H460M460 868A30 30 0 0 1 486 837.500"/>
<path d="M326 1004.500H356.500M356.500 1004.500A30 30 0 0 1 330 1034M326 1064.500H356.500M356.500 1064.500A30 30 0 0 0 330 1034"/>
<path d="M418 1080V1105M418 1105A27 27 0 0 0 445.500 1080"/>
</g>
<g fill="none" stroke="#000" stroke-width="3.600" stroke-linecap="butt">
<path d="M264.2 514.500H510.0M569.0 514.500H582.0M641.5 514.500H696.0M755.4 514.500H767.8M827.0 514.500H869.0M927.6 514.500H938.2M997.5 514.500H1091.6M1150.7 514.500H1160.7M1219.8 514.500H1231.8M1290.9 514.500H1308.7"/>
<path d="M266 512.700V891.500H491.800"/>
<path d="M1306.900 512.700V1171.800"/>
<path d="M326.200 891.500V1004.500M326.200 1064.500V1171.800"/>
<path d="M324.400 1170H1308.700"/>
<path d="M490 516V660M490 719V808.500M490 868V898M490 996.500V1170"/>
<path d="M670 516V651M851.500 516V651M1023.200 516V651"/>
<path d="M488.200 651.300H505M532.500 651.300H704M731.500 651.300H876M903.500 651.300H1114M1267.500 651.300H1307"/>
<path d="M326 1079.500H417.500M446 1079.500H490"/>
</g>
<g stroke="#999" stroke-width="1" fill="#fff">
<rect x="510.0" y="512.700" width="59.0" height="3.600"/>
<rect x="582.0" y="512.700" width="59.5" height="3.600"/>
<rect x="696.0" y="512.700" width="59.4" height="3.600"/>
<rect x="767.8" y="512.700" width="59.2" height="3.600"/>
<rect x="869.0" y="512.700" width="58.6" height="3.600"/>
<rect x="938.2" y="512.700" width="59.3" height="3.600"/>
<rect x="1091.6" y="512.700" width="59.1" height="3.600"/>
<rect x="1160.7" y="512.700" width="59.1" height="3.600"/>
<rect x="1231.8" y="512.700" width="59.1" height="3.600"/>
</g>
</g>
<g transform="translate(1673 1051) scale(.2076) translate(-228 -366)"><use href="#fp"/></g>
</svg>
<!-- ===== STARDOCK TILES PANEL ===== -->
<div class="a" style="left:2261px;top:0;width:299px;height:1373px;overflow:hidden;background:#eeb45c">
<svg style="left:0;top:0" width="299" height="1373" viewBox="0 0 299 1373">
<defs>
<linearGradient id="wd" x1="0" y1="0" x2="0" y2="1"><stop offset="0" stop-color="#f1c57e"/><stop offset=".25" stop-color="#efb660"/><stop offset=".55" stop-color="#eeb057"/><stop offset="1" stop-color="#f3b95e"/></linearGradient>
<linearGradient id="wdx" x1="0" y1="0" x2="1" y2="0"><stop offset="0" stop-color="#d98a2a" stop-opacity=".75"/><stop offset=".06" stop-color="#d98a2a" stop-opacity=".28"/><stop offset=".2" stop-color="#e9a040" stop-opacity="0"/><stop offset=".8" stop-color="#e9a040" stop-opacity="0"/><stop offset="1" stop-color="#e09030" stop-opacity=".25"/></linearGradient>
<filter id="grain" x="0" y="0" width="100%" height="100%"><feTurbulence type="fractalNoise" baseFrequency="0.05 0.0035" numOctaves="3" seed="11"/><feColorMatrix values="0 0 0 0 .72  0 0 0 0 .4  0 0 0 0 .1  0 0 0 -2.2 1.0"/></filter>
<linearGradient id="sheen" x1="0" y1="0" x2="1" y2="0"><stop offset="0" stop-color="#fff" stop-opacity=".32"/><stop offset="1" stop-color="#fff" stop-opacity=".12"/></linearGradient>
</defs>
<rect width="299" height="1373" fill="url(#wd)"/>
<rect width="299" height="1373" filter="url(#grain)" opacity=".55"/>
<path d="M0 0H250L0 640Z" fill="url(#sheen)"/>
<rect width="299" height="1373" fill="url(#wdx)"/>
<rect x="0" y="0" width="6" height="1373" fill="#e6c084"/>
<rect x="0" y="0" width="1.5" height="1373" fill="#b88a50"/>
<rect x="24" y="88" width="275" height="1.5" fill="#f6d9a4" opacity=".9"/>
<rect x="24" y="89.5" width="275" height="4" fill="#c98a3a" opacity=".35"/>
</svg>
<div class="t" style="left:29px;top:21px;font-size:46px;font-weight:bold;color:#8e400c;transform:scaleX(0.892);background:linear-gradient(90deg,#9a4a0e,#7c3406 30%,#a4500f 55%,#7e3607 80%,#9a480c);-webkit-background-clip:text;background-clip:text;-webkit-text-fill-color:transparent">BizPlan</div>
<div class="t" style="left:196px;top:33px;font-size:30.5px;font-weight:bold;color:#8e400c;transform:scaleX(0.907);background:linear-gradient(90deg,#8a3c08,#a4500f 50%,#8a3c08);-webkit-background-clip:text;background-clip:text;-webkit-text-fill-color:transparent">Design</div>
<div class="t tl" style="left:24.500px;top:111px;transform:scaleX(1.008)">Affinity Photo</div>
<div class="t tl" style="left:24.500px;top:316px;transform:scaleX(0.966)">Budget proposal - Wo<span style="opacity:.55">r</span><span style="opacity:.25">d</span></div>
<div class="t tl" style="left:24.500px;top:527px;transform:scaleX(0.947)">Stardock Tiles: A cont<span style="opacity:.6">r</span><span style="opacity:.45">ol</span><span style="opacity:.3"> ce</span></div>
<!-- thumb 1 : Affinity -->
<div class="a" style="left:24px;top:141px;width:250px;height:157px;background:linear-gradient(180deg,#5e3d66 0%,#6a4862 18%,#8a6a52 38%,#b8923a 60%,#d7a520 82%,#e0ae28 100%);box-shadow:0 4px 8px rgba(90,50,0,.55);overflow:hidden">
  <div class="a" style="left:240px;top:0;width:10px;height:157px;background:linear-gradient(180deg,#e8a888,#f0b860 50%,#f4c040)"></div>
  <div class="a" style="left:0;top:0;width:150px;height:157px;background:linear-gradient(180deg,rgba(255,255,255,.32),rgba(255,255,255,.1));clip-path:polygon(0 0,105px 0,42px 157px,0 157px)"></div>
  <div class="a" style="left:3px;top:5px;width:4px;height:16px;background:#e890f0"></div>
  <div class="a" style="left:11px;top:10px;width:122px;height:8px;background:repeating-linear-gradient(90deg,rgba(240,220,230,.55) 0 5px,transparent 5px 10px)"></div>
  <div class="a" style="left:4px;top:36px;width:6px;height:20px;background:#e890f0;opacity:.8"></div>
  <div class="a" style="left:14px;top:38px;width:214px;height:16px;background:repeating-linear-gradient(90deg,rgba(235,215,220,.45) 0 4px,transparent 4px 11px,rgba(235,215,220,.3) 11px 14px,transparent 14px 27px)"></div>
  <div class="a" style="left:3px;top:70px;width:232px;height:8px;background:repeating-linear-gradient(90deg,rgba(245,230,210,.4) 0 9px,transparent 9px 16px)"></div>
  <div class="a" style="left:10px;top:91px;width:30px;height:6px;background:rgba(245,230,210,.4)"></div>
  <div class="a" style="left:190px;top:90px;width:40px;height:7px;background:rgba(245,230,210,.35)"></div>
  <div class="a" style="left:0;top:104px;width:184px;height:53px;background:rgba(215,160,20,.35)"></div>
  <div class="a" style="left:186px;top:118px;width:7px;height:18px;border-radius:50%;background:#f2c84a"></div>
</div>
<svg style="left:238px;top:254px" width="54" height="54" viewBox="0 0 54 54"><use href="#aflogo"/></svg>
<!-- thumb 2 : Word -->
<div class="a" style="left:24px;top:345px;width:250px;height:164px;background:#b9c9e6;box-shadow:0 4px 8px rgba(90,50,0,.55);overflow:hidden">
  <div class="a" style="left:0;top:0;width:250px;height:8px;background:#2f5fb0"></div>
  <div class="a" style="left:118px;top:1.5px;width:66px;height:5px;background:#6f93cf"></div>
  <div class="a" style="left:0;top:8px;width:250px;height:30px;background:#c3d2ec"></div>
  <div class="a" style="left:6px;top:11px;width:150px;height:3px;background:repeating-linear-gradient(90deg,#7f95bf 0 8px,transparent 8px 14px)"></div>
  <div class="a" style="left:5px;top:18px;width:200px;height:14px;background:repeating-linear-gradient(90deg,#92a6cc 0 3px,transparent 3px 6px);opacity:.6"></div>
  <div class="a" style="left:139px;top:17px;width:46px;height:13px;background:#d5def1;border:1px solid #8ea2c9"></div>
  <div class="a" style="left:222px;top:16px;width:5px;height:9px;background:#4d7ad0"></div>
  <div class="a" style="left:0;top:38px;width:250px;height:126px;background:#b3c4e4"></div>
  <div class="a" style="left:28px;top:42px;width:190px;height:122px;background:#becdea"></div>
  <div class="a" style="left:50px;top:64px;width:146px;height:46px;background:repeating-linear-gradient(180deg,#6f7fa4 0 1.6px,transparent 1.6px 4.2px);opacity:.55"></div>
  <div class="a" style="left:50px;top:127px;width:146px;height:30px;background:repeating-linear-gradient(180deg,#6f7fa4 0 1.6px,transparent 1.6px 4.2px);opacity:.55"></div>
  <div class="a" style="left:0;top:159px;width:250px;height:5px;background:#c7d3ea"></div>
</div>
<svg style="left:237px;top:465px" width="55" height="55" viewBox="0 0 55 55"><use href="#wordicon"/></svg>
<!-- thumb 3 : Edge/Stardock -->
<div class="a" style="left:24px;top:556px;width:250px;height:172px;background:#b7e3dc;box-shadow:0 4px 8px rgba(90,50,0,.55);overflow:hidden">
  <div class="a" style="left:0;top:0;width:250px;height:8px;background:#9fd0cc"></div>
  <div class="a" style="left:3px;top:2px;width:200px;height:4px;background:repeating-linear-gradient(90deg,#5f9fa8 0 22px,transparent 22px 33px);opacity:.7"></div>
  <div class="a" style="left:0;top:8px;width:250px;height:9px;background:#c4ebe4"></div>
  <div class="a" style="left:0;top:17px;width:250px;height:8px;background:#bfe6df"></div>
  <div class="a" style="left:4px;top:19px;width:240px;height:4px;background:repeating-linear-gradient(90deg,#6fa890 0 9px,transparent 9px 19px);opacity:.6"></div>
  <div class="a" style="left:0;top:25px;width:250px;height:11px;background:#2580b8"></div>
  <div class="a" style="left:4px;top:28px;width:26px;height:5px;background:#d8f0f4"></div>
  <div class="a" style="left:36px;top:26px;width:22px;height:10px;background:#2f94cc"></div>
  <div class="a" style="left:0;top:36px;width:250px;height:30px;background:#aedbd6"></div>
  <div class="a" style="left:28px;top:39px;width:70px;height:3px;background:#4a7f88"></div>
  <div class="a" style="left:0;top:66px;width:250px;height:106px;background:#bfe9e2"></div>
  <div class="a" style="left:29px;top:89px;width:22px;height:26px;background:#7fb0c0;border:1px solid #3a6070"></div>
  <div class="a" style="left:29px;top:128px;width:40px;height:24px;background:#6fa8b4;border:1px solid #3a6070"></div>
  <div class="a" style="left:77px;top:140px;width:40px;height:12px;background:#2f78a8"></div>
  <div class="a" style="left:122px;top:140px;width:40px;height:12px;background:#88c070"></div>
  <div class="a" style="left:170px;top:135px;width:46px;height:17px;background:#2a6a90"></div>
  <div class="a" style="left:200px;top:88px;width:16px;height:28px;background:#3a88b0"></div>
  <div class="a" style="left:41px;top:51px;width:167px;height:92px;background:#5f8f8c;border:1px solid #2f5050"></div>
  <div class="a" style="left:41px;top:51px;width:6px;height:86px;background:linear-gradient(#7a80a8,#88a860)"></div>
  <div class="a" style="left:45px;top:54px;width:135px;height:82px;background:#9fc8c0"></div>
  <div class="a" style="left:50px;top:64px;width:95px;height:64px;background:#c4e8e0;border:1px solid #6f9f98"></div>
  <div class="a" style="left:76px;top:69px;width:50px;height:46px;border:1px solid #6f9f98;background:repeating-linear-gradient(90deg,transparent 0 11px,#7faaa4 11px 12px)"></div>
  <div class="a" style="left:153px;top:58px;width:22px;height:56px;background:#6f9890"></div>
  <div class="a" style="left:155px;top:62px;width:18px;height:20px;background:#c4e0d8"></div>
  <div class="a" style="left:190px;top:51px;width:18px;height:90px;background:#c89848"></div>
  <div class="a" style="left:192px;top:60px;width:14px;height:12px;background:#a8d0e0"></div>
  <div class="a" style="left:192px;top:78px;width:14px;height:10px;background:#e8e0d0"></div>
  <div class="a" style="left:192px;top:92px;width:14px;height:10px;background:#90c0e0"></div>
  <div class="a" style="left:41px;top:139px;width:167px;height:4px;background:#203840"></div>
</div>
<svg style="left:237.500px;top:685px" width="54" height="55" viewBox="0 0 56 57"><use href="#edgeicon"/></svg>
<div class="a" style="left:144px;top:748px;width:9px;height:9px;border-radius:50%;background:#b86a1c;box-shadow:inset 0 2px 2px #7a3c08,0 1px 0 #f8d8a0"></div>
<!-- items -->
<svg style="left:34px;top:781px" width="30" height="32" viewBox="0 0 30 32"><path d="M7 1h14l7 7v23H7z" fill="#fff" stroke="#b8b8b8" stroke-width="1"/><path d="M21 1v7h7" fill="#e8e8e8" stroke="#b8b8b8"/><rect x="17" y="12" width="8" height="8" fill="#a8c4ee"/><rect x="1" y="9" width="15" height="15" fill="#2357c3"/><path d="M3.5 12.5l2 8 2.5-7 2.5 7 2-8" fill="none" stroke="#fff" stroke-width="1.8"/></svg>
<svg style="left:34px;top:855px" width="30" height="32" viewBox="0 0 30 32"><path d="M7 1h14l7 7v23H7z" fill="#fff" stroke="#b8b8b8" stroke-width="1"/><path d="M21 1v7h7" fill="#e8e8e8" stroke="#b8b8b8"/><path d="M18 12h8M18 15h8M18 18h8M18 21h8" stroke="#2a9a55" stroke-width="1.6" stroke-dasharray="3.4 1.2"/><rect x="1" y="9" width="15" height="15" fill="#187a40"/><path d="M4.5 12.5l8 8M12.5 12.5l-8 8" stroke="#fff" stroke-width="2"/></svg>
<svg style="left:37px;top:931px" width="22" height="30" viewBox="0 0 22 30"><path d="M2 2h14v5h3v16H8l-6 5z" fill="#f6d676"/><path d="M2 2v26l6-5V6z" fill="#eec353"/><path d="M8 7h11v16H8z" fill="#fae08f"/></svg>
<svg style="left:37px;top:1004px" width="22" height="30" viewBox="0 0 22 30"><path d="M2 2h14v5h3v16H8l-6 5z" fill="#f6d676"/><path d="M2 2v26l6-5V6z" fill="#eec353"/><path d="M8 7h11v16H8z" fill="#fae08f"/></svg>
<div class="t tl" style="left:90px;top:786px;transform:scaleX(0.968)">Software.doc<span style="opacity:.5">x</span></div>
<div class="t tl" style="left:90px;top:860px;transform:scaleX(0.928)">CFX themes an<span style="opacity:.6">d</span><span style="opacity:.4"> eff</span></div>
<div class="t tl" style="left:90px;top:933px;transform:scaleX(0.902)">CursorFX 4</div>
<div class="t tl" style="left:90px;top:1007px;transform:scaleX(0.891)">DeskScapes</div>
<!-- stardock logo -->
<svg style="left:69px;top:1240px" width="160" height="120" viewBox="0 0 160 120">
<defs><path id="sdring" fill-rule="evenodd" d="M21.600 57.500a58 15 0 1 0 116 0a58 15 0 1 0-116 0ZM36.600 57.500a43 6.500 0 1 0 86 0a43 6.500 0 1 0-86 0Z" transform="rotate(-34 79.600 57.500)"/></defs>
<g transform="translate(.9 1.200)" fill="none" stroke="#fdf0d0" stroke-width="2"><use href="#sdring"/><circle cx="78.800" cy="57.500" r="29"/></g>
<use href="#sdring" fill="#c08437" stroke="#6b4614" stroke-width="1.600"/>
<circle cx="78.800" cy="57.500" r="29" fill="#c08437" stroke="#6b4614" stroke-width="1.600"/>
<use href="#sdring" fill="#c08437"/>
<path d="M97 35.500C84 38 73 46 75.500 54S89 64 85 72 70 81 61.500 83.500" fill="none" stroke="#6b4614" stroke-width="8.600" stroke-linecap="butt"/>
<path d="M98 35.300C84 38 73 46 75.500 54S89 64 85 72 70 81 60.500 83.800" fill="none" stroke="#f5c672" stroke-width="6.400" stroke-linecap="butt"/>
<path d="M86 30v56M92 32v52M99 40v36" stroke="#a86a24" stroke-width="1" opacity=".35"/>
</svg>
</div>
<!-- ===== TASKBAR ===== -->
<div class="a" style="left:0;top:1373px;width:2560px;height:67px;background:#1b1815;overflow:hidden">
<svg style="left:0;top:0" width="2560" height="67"><filter id="tbn" x="0" y="0" width="100%" height="100%"><feTurbulence type="fractalNoise" baseFrequency="0.05 0.08" numOctaves="2" seed="3"/><feColorMatrix values="0 0 0 0 .04  0 0 0 0 .035  0 0 0 0 .03  0 0 0 -2 1.1"/></filter><rect width="2560" height="67" filter="url(#tbn)" opacity=".8"/></svg>
<!-- start -->
<svg style="left:26px;top:20px" width="29" height="29" viewBox="0 0 29 29"><path d="M0 4.2L11.8 2.6V13.7H0zM13.2 2.4L29 0V13.7H13.2zM0 15.1H11.8V26.3L0 24.7zM13.2 15.1H29V29L13.2 26.6z" fill="#fff"/></svg>
<!-- search box -->
<div class="a" style="left:81px;top:2px;width:571px;height:65px;background:#f2f2f2;border:1px solid #d0d0d0"></div>
<svg style="left:101px;top:15px" width="36" height="36" viewBox="0 0 36 36"><circle cx="22" cy="13" r="10.5" fill="none" stroke="#111" stroke-width="2.2"/><path d="M14.6 20.4L1.5 33.5" stroke="#111" stroke-width="2.4"/></svg>
<div class="t" style="left:154.5px;top:22px;font-size:25.5px;color:#2e2e2e;transform:scaleX(0.964)">Type here to search</div>
<!-- cortana, taskview -->
<div class="a" style="left:680px;top:22px;width:26px;height:26px;border-radius:50%;border:3.6px solid #fff"></div>
<svg style="left:758px;top:19px" width="30" height="30" viewBox="0 0 30 30"><path d="M3 7h17v16H3zM3 1v3M3 26v3M20 1v3M20 26v3M3 3h17M3 27h17" fill="none" stroke="#fff" stroke-width="2"/><path d="M26 1v6M26 15v14" stroke="#fff" stroke-width="2"/><circle cx="26" cy="10.5" r="1.8" fill="#fff"/></svg>
<!-- active app bgs -->
<div class="a" style="left:1232px;top:0;width:80px;height:67px;background:#4a4643"></div>
<div class="a" style="left:1397px;top:0;width:81px;height:67px;background:#2e2b28"></div>
<!-- icons -->
<svg style="left:838px;top:13px" width="42" height="43" viewBox="0 0 56 57"><use href="#edgeicon"/></svg>
<svg style="left:922px;top:15px" width="38" height="36" viewBox="0 0 38 36"><path d="M1 6c0-2 1-3 3-3h10l3 4h18c1.500 0 2 1 2 2v5H1z" fill="#e8a317"/><rect x="1" y="8" width="36" height="24" rx="1.500" fill="#fcd462"/><path d="M8 32V22c0-1 1-2 2-2h18c1 0 2 1 2 2v10h-5v-7H13v7z" fill="#3d8fd8"/></svg>
<svg style="left:1003px;top:12px" width="40" height="44" viewBox="0 0 40 44"><path d="M12 14V9a8 8 0 0 1 16 0v5" fill="none" stroke="#fff" stroke-width="2.2"/><path d="M1 12h38v28c0 1.500-1 2-2 2H3c-1.500 0-2-1-2-2z" fill="#fff"/><rect x="12" y="18" width="7.500" height="7.500" fill="#f25022"/><rect x="20.500" y="18" width="7.500" height="7.500" fill="#7fba00"/><rect x="12" y="26.500" width="7.500" height="7.500" fill="#00a4ef"/><rect x="20.500" y="26.500" width="7.500" height="7.500" fill="#ffb900"/></svg>
<svg style="left:1086px;top:13px" width="44" height="44" viewBox="0 0 44 44"><circle cx="23" cy="8" r="6" fill="#7b83eb"/><circle cx="34" cy="10" r="4.200" fill="#5059c9"/><path d="M28 17h11c1.500 0 2 .8 2 2v9c0 4-3 6-6 6s-7-2-7-6z" fill="#5059c9"/><path d="M12 17h18c1 0 2 1 2 2v11c0 6-5 9-10 9s-10-3-10-9z" fill="#7b83eb"/><rect x="1" y="10" width="18" height="18" rx="2" fill="#4b53bc"/><path d="M5.500 14.500h9M10 14.500v10" stroke="#fff" stroke-width="2.400"/><circle cx="34" cy="34" r="8" fill="#fff"/><circle cx="34" cy="34" r="6.500" fill="#6cbc3c"/><path d="M30.500 34l2.500 2.800 4.500-5" fill="none" stroke="#fff" stroke-width="2"/></svg>
<svg style="left:1168px;top:14px" width="40" height="40" viewBox="0 0 55 55"><use href="#wordicon"/></svg>
<svg style="left:1252px;top:14px" width="40" height="40" viewBox="0 0 54 54"><use href="#aflogo"/></svg>
<svg style="left:1337.500px;top:16px" width="34" height="36" viewBox="0 0 34 36"><rect x="0" y="0" width="34" height="32" fill="#141414"/><rect x="0.30" y="0.30" width="3.700" height="3.500" rx=".8" fill="#2f7ae0"/><rect x="4.55" y="0.30" width="3.700" height="3.500" rx=".8" fill="#2fa83a"/><rect x="8.80" y="0.30" width="3.700" height="3.500" rx=".8" fill="#dc3428"/><rect x="13.05" y="0.30" width="3.700" height="3.500" rx=".8" fill="#eeb418"/><rect x="17.30" y="0.30" width="3.700" height="3.500" rx=".8" fill="#2f7ae0"/><rect x="21.55" y="0.30" width="3.700" height="3.500" rx=".8" fill="#2fa83a"/><rect x="25.80" y="0.30" width="3.700" height="3.500" rx=".8" fill="#dc3428"/><rect x="30.05" y="0.30" width="3.700" height="3.500" rx=".8" fill="#eeb418"/><rect x="0.30" y="4.30" width="3.700" height="3.500" rx=".8" fill="#eeb418"/><rect x="30.05" y="4.30" width="3.700" height="3.500" rx=".8" fill="#dc3428"/><rect x="0.30" y="8.30" width="3.700" height="3.500" rx=".8" fill="#dc3428"/><rect x="30.05" y="8.30" width="3.700" height="3.500" rx=".8" fill="#2fa83a"/><rect x="0.30" y="12.30" width="3.700" height="3.500" rx=".8" fill="#2fa83a"/><rect x="4.55" y="12.30" width="3.700" height="3.500" rx=".8" fill="#dc3428"/><rect x="8.80" y="12.30" width="3.700" height="3.500" rx=".8" fill="#eeb418"/><rect x="21.55" y="12.30" width="3.700" height="3.500" rx=".8" fill="#dc3428"/><rect x="25.80" y="12.30" width="3.700" height="3.500" rx=".8" fill="#eeb418"/><rect x="30.05" y="12.30" width="3.700" height="3.500" rx=".8" fill="#2f7ae0"/><rect x="0.30" y="16.30" width="3.700" height="3.500" rx=".8" fill="#2f7ae0"/><rect x="4.55" y="16.30" width="3.700" height="3.500" rx=".8" fill="#2fa83a"/><rect x="8.80" y="16.30" width="3.700" height="3.500" rx=".8" fill="#dc3428"/><rect x="21.55" y="16.30" width="3.700" height="3.500" rx=".8" fill="#2fa83a"/><rect x="25.80" y="16.30" width="3.700" height="3.500" rx=".8" fill="#dc3428"/><rect x="30.05" y="16.30" width="3.700" height="3.500" rx=".8" fill="#eeb418"/><rect x="0.30" y="20.30" width="3.700" height="3.500" rx=".8" fill="#eeb418"/><rect x="4.55" y="20.30" width="3.700" height="3.500" rx=".8" fill="#2f7ae0"/><rect x="8.80" y="20.30" width="3.700" height="3.500" rx=".8" fill="#2fa83a"/><rect x="21.55" y="20.30" width="3.700" height="3.500" rx=".8" fill="#2f7ae0"/><rect x="25.80" y="20.30" width="3.700" height="3.500" rx=".8" fill="#2fa83a"/><rect x="30.05" y="20.30" width="3.700" height="3.500" rx=".8" fill="#dc3428"/><rect x="0.30" y="24.30" width="3.700" height="3.500" rx=".8" fill="#dc3428"/><rect x="4.55" y="24.30" width="3.700" height="3.500" rx=".8" fill="#eeb418"/><rect x="8.80" y="24.30" width="3.700" height="3.500" rx=".8" fill="#2f7ae0"/><rect x="21.55" y="24.30" width="3.700" height="3.500" rx=".8" fill="#eeb418"/><rect x="25.80" y="24.30" width="3.700" height="3.500" rx=".8" fill="#2f7ae0"/><rect x="30.05" y="24.30" width="3.700" height="3.500" rx=".8" fill="#2fa83a"/><rect x="0.30" y="28.30" width="3.700" height="3.500" rx=".8" fill="#2fa83a"/><rect x="4.55" y="28.30" width="3.700" height="3.500" rx=".8" fill="#dc3428"/><rect x="8.80" y="28.30" width="3.700" height="3.500" rx=".8" fill="#eeb418"/><rect x="13.05" y="28.30" width="3.700" height="3.500" rx=".8" fill="#2f7ae0"/><rect x="17.30" y="28.30" width="3.700" height="3.500" rx=".8" fill="#2fa83a"/><rect x="21.55" y="28.30" width="3.700" height="3.500" rx=".8" fill="#dc3428"/><rect x="25.80" y="28.30" width="3.700" height="3.500" rx=".8" fill="#eeb418"/><rect x="30.05" y="28.30" width="3.700" height="3.500" rx=".8" fill="#2f7ae0"/><path d="M-.500 33h35l-1 2h-33z" fill="#3a3a3a"/></svg>
<svg style="left:1422px;top:17px" width="32" height="36" viewBox="0 0 32 36"><path d="M0 0H14A17.700 18 0 0 1 14 36H0Z" fill="#c84e14"/><path d="M29 5.800H10.200A5.100 5.100 0 0 0 10.200 16H19.200A5.400 5.400 0 0 1 19.200 26.800H-1" fill="none" stroke="#2e2b28" stroke-width="3.900"/></svg>
<!-- underlines -->
<div class="a" style="left:825px;top:63px;width:68px;height:4px;background:#79c3f7"></div>
<div class="a" style="left:1073px;top:63px;width:68px;height:4px;background:#79c3f7"></div>
<div class="a" style="left:1156px;top:63px;width:67px;height:4px;background:#79c3f7"></div>
<div class="a" style="left:1232px;top:63px;width:80px;height:4px;background:#79c3f7"></div>
<div class="a" style="left:1321px;top:63px;width:68px;height:4px;background:#79c3f7"></div>
<div class="a" style="left:1397px;top:63px;width:81px;height:4px;background:#79c3f7"></div>
<!-- tray -->
<svg style="left:2047px;top:26px" width="24" height="14" viewBox="0 0 24 14"><path d="M1 13L12 2l11 11" fill="none" stroke="#fff" stroke-width="1.8"/></svg>
<svg style="left:2097px;top:23px" width="30" height="20" viewBox="0 0 30 20"><path d="M7 19a6 6 0 0 1-1-11.800A8 8 0 0 1 21 6a6.500 6.500 0 0 1 2 13z" fill="#fff"/><path d="M4 12c4-3 14-3 22 4" fill="none" stroke="#aaa" stroke-width="1.200" opacity=".7"/></svg>
<svg style="left:2151px;top:22px" width="30" height="22" viewBox="0 0 30 22"><rect x="8" y="6" width="19" height="12" fill="none" stroke="#fff" stroke-width="1.800"/><rect x="27.500" y="9.500" width="2" height="5" fill="#fff"/><rect x="11" y="9" width="11" height="6" fill="#fff"/><path d="M3 1v4M7 1v4M1.500 5h7v3c0 2-1.500 3-3.500 3S1.500 10 1.500 8zM5 11v5h3" fill="none" stroke="#fff" stroke-width="1.600"/></svg>
<svg style="left:2206px;top:20px" width="30" height="28" viewBox="0 0 30 28"><path d="M2 26A22 22 0 0 1 24 4M8 26A16 16 0 0 1 24 10M14 26a10 10 0 0 1 10-10" fill="none" stroke="#fff" stroke-width="1.600"/><circle cx="23" cy="24.500" r="2.400" fill="#fff"/></svg>
<svg style="left:2258px;top:21px" width="30" height="26" viewBox="0 0 30 26"><path d="M2 9h5l6-6v20l-6-6H2z" fill="none" stroke="#fff" stroke-width="1.700"/><path d="M16 9c2 2 2 6 0 8M20 6c3.500 4 3.500 10 0 14" fill="none" stroke="#fff" stroke-width="1.600"/><path d="M24 3c5 6 5 14 0 20" fill="none" stroke="#777" stroke-width="1.400"/></svg>
<div class="t" style="left:2310px;top:25px;font-size:20px;color:#fff;transform:scaleX(0.884)">ENG</div>
<div class="t" style="left:2380px;top:9px;font-size:20.500px;color:#fff;transform:scaleX(0.921)">1:43 PM</div>
<div class="t" style="left:2370px;top:40px;font-size:20.500px;color:#fff;transform:scaleX(0.995)">2/27/2020</div>
<svg style="left:2490px;top:19px" width="44" height="40" viewBox="0 0 44 40"><path d="M1 1h27v21H10l-5 5v-5H1z" fill="#fff"/><path d="M5 6.500h19M5 11h19M5 15.500h12" stroke="#1b1815" stroke-width="1.600"/><circle cx="27" cy="26" r="12" fill="#2c2c2c" stroke="#8a8a8a" stroke-width="1"/></svg>
<div class="t" style="left:2511px;top:35px;font-size:20px;font-weight:bold;color:#fff">5</div>
<div class="a" style="left:2551px;top:0;width:1px;height:67px;background:#555"></div>
</div>
</body></html>
